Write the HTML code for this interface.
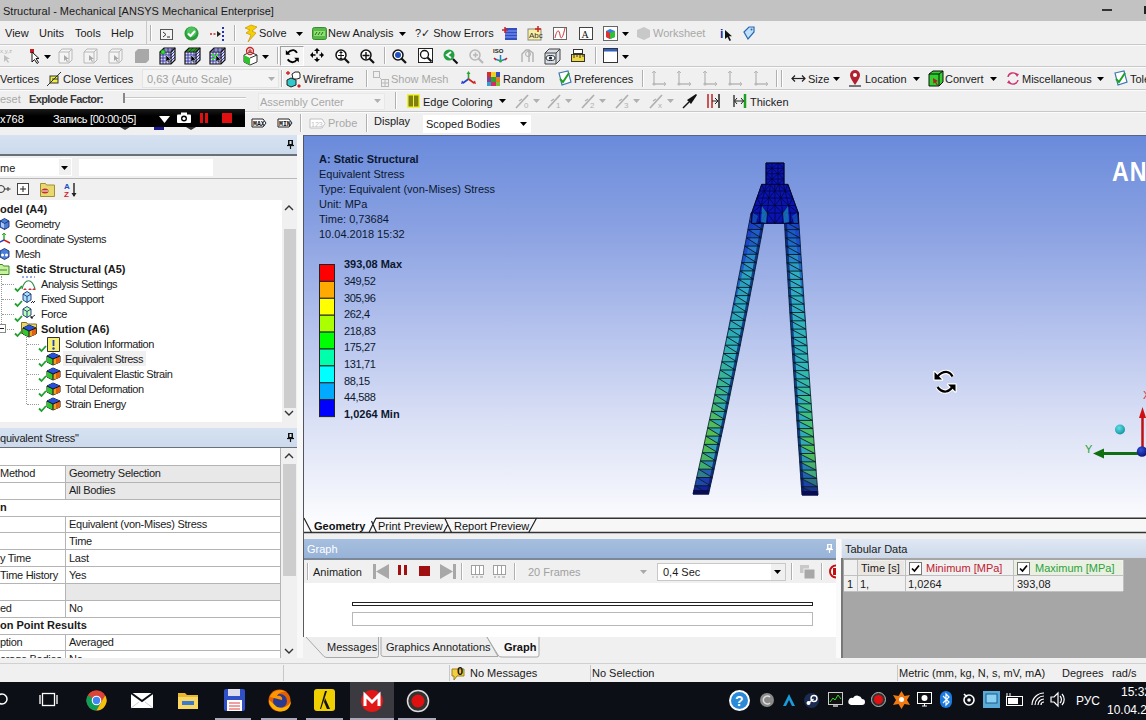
<!DOCTYPE html>
<html><head><meta charset="utf-8">
<style>
*{margin:0;padding:0;box-sizing:border-box}
html,body{width:1146px;height:720px;overflow:hidden;background:#f0f0f0;font-family:"Liberation Sans",sans-serif;font-size:11px;color:#000}
.a{position:absolute}
.t{position:absolute;white-space:nowrap}
svg{overflow:visible}
</style></head><body>
<div class="a" style="left:0px;top:0px;width:1146px;height:21px;background:#c2c2c2"></div>
<div class="t" style="left:3px;top:5.9px;font-size:11px;line-height:11px;color:#1a1a1a;">Structural - Mechanical [ANSYS Mechanical Enterprise]</div>
<div class="a" style="left:1102px;top:9px;width:10px;height:2px;background:#333"></div>
<div class="a" style="left:1144px;top:6px;width:6px;height:8px;border:2px solid #222"></div>
<div class="a" style="left:0px;top:21px;width:1146px;height:114px;background:#f0f0f0"></div>
<div class="a" style="left:0px;top:44px;width:1146px;height:1px;background:#c8c8c8"></div>
<div class="a" style="left:0px;top:45px;width:1146px;height:1px;background:#fbfbfb"></div>
<div class="a" style="left:0px;top:66px;width:1146px;height:1px;background:#c8c8c8"></div>
<div class="a" style="left:0px;top:67px;width:1146px;height:1px;background:#fbfbfb"></div>
<div class="a" style="left:0px;top:89px;width:1146px;height:1px;background:#c8c8c8"></div>
<div class="a" style="left:0px;top:90px;width:1146px;height:1px;background:#fbfbfb"></div>
<div class="a" style="left:0px;top:111px;width:1146px;height:1px;background:#c8c8c8"></div>
<div class="a" style="left:0px;top:112px;width:1146px;height:1px;background:#fbfbfb"></div>
<div class="t" style="left:5px;top:28.4px;font-size:11px;line-height:11px;color:#1a1a1a;">View</div>
<div class="t" style="left:39px;top:28.4px;font-size:11px;line-height:11px;color:#1a1a1a;">Units</div>
<div class="t" style="left:75px;top:28.4px;font-size:11px;line-height:11px;color:#1a1a1a;">Tools</div>
<div class="t" style="left:111px;top:28.4px;font-size:11px;line-height:11px;color:#1a1a1a;">Help</div>
<div class="a" style="left:146px;top:21px;width:1px;height:23px;background:#c8c8c8"></div>
<div class="a" style="left:150px;top:25px;width:1px;height:16px;background:#b0b0b0"></div>
<div class="a" style="left:151px;top:25px;width:1px;height:16px;background:#ffffff"></div>
<svg class="a" style="left:160px;top:29px" width="13" height="11" viewBox="0 0 13 11"><rect x="0.5" y="0.5" width="12" height="10" fill="#f4f4f4" stroke="#555"/><path d="M3 3l3 2.5L3 8M7 8h3" stroke="#333" fill="none"/></svg>
<svg class="a" style="left:184px;top:26px" width="15" height="15" viewBox="0 0 15 15"><circle cx="7.5" cy="7.5" r="7" fill="#2a9d3a"/><circle cx="7.5" cy="6" r="5" fill="#4cc25a"/><path d="M4 7.5l2.5 2.5L11 5" stroke="#fff" stroke-width="2" fill="none"/></svg>
<svg class="a" style="left:210px;top:27px" width="15" height="14" viewBox="0 0 15 14"><path d="M0 7h8" stroke="#d02020" stroke-width="1.6" stroke-dasharray="2 1.5"/><path d="M7 4l4 3-4 3z" fill="#222"/><rect x="12" y="0" width="2" height="2" fill="#2030c0"/><rect x="12" y="4" width="2" height="2" fill="#2030c0"/><rect x="12" y="8" width="2" height="2" fill="#2030c0"/><rect x="12" y="12" width="2" height="2" fill="#2030c0"/></svg>
<div class="a" style="left:234px;top:25px;width:1px;height:16px;background:#b0b0b0"></div>
<div class="a" style="left:235px;top:25px;width:1px;height:16px;background:#ffffff"></div>
<svg class="a" style="left:245px;top:25px" width="13" height="17" viewBox="0 0 13 17"><path d="M6 0L12 2 7 6 11 8 3 17 6 10 1 8 5 5 0 3Z" fill="#f4d000" stroke="#c89000" stroke-width="0.7"/></svg>
<div class="t" style="left:259px;top:28.4px;font-size:11px;line-height:11px;color:#1a1a1a;">Solve</div>
<svg class="a" style="left:296px;top:32px" width="7" height="4" viewBox="0 0 7 4"><path d="M0 0H7L3.5 4Z" fill="#000"/></svg>
<svg class="a" style="left:312px;top:27px" width="15" height="13" viewBox="0 0 15 13"><rect x="0.5" y="0.5" width="14" height="12" rx="2" fill="#58b848" stroke="#3b8a30"/><rect x="2" y="4" width="11" height="5" fill="#8ee070"/><path d="M3 8l2-3M6 8l2-3M9 8l2-3" stroke="#2a6a20"/></svg>
<div class="t" style="left:328px;top:28.4px;font-size:11px;line-height:11px;color:#1a1a1a;">New Analysis</div>
<svg class="a" style="left:399px;top:32px" width="7" height="4" viewBox="0 0 7 4"><path d="M0 0H7L3.5 4Z" fill="#000"/></svg>
<div class="t" style="left:415px;top:28.4px;font-size:11px;line-height:11px;color:#1a1a1a;">?&#10003; Show Errors</div>
<svg class="a" style="left:502px;top:26px" width="16" height="15" viewBox="0 0 16 15"><rect x="3" y="2" width="12" height="12" fill="#3050c0"/><path d="M3 5l12 0M3 8h12M3 11h12" stroke="#8aa0ff"/><path d="M0 4h6M3 1v6" stroke="#d02020" stroke-width="1.5"/></svg>
<svg class="a" style="left:527px;top:26px" width="16" height="15" viewBox="0 0 16 15"><rect x="1" y="3" width="13" height="11" fill="#f8f0a0" stroke="#888"/><text x="2" y="12" font-size="8" font-family="Liberation Sans" fill="#333">Abc</text><path d="M11 0v6M8 3h6" stroke="#d02020" stroke-width="1.5"/></svg>
<svg class="a" style="left:552px;top:26px" width="16" height="15" viewBox="0 0 16 15"><rect x="1.5" y="1.5" width="13" height="12" fill="#fff" stroke="#666"/><path d="M3 12c2-9 4-9 5-3s3 2 5-7" stroke="#d03030" fill="none"/></svg>
<svg class="a" style="left:578px;top:26px" width="16" height="15" viewBox="0 0 16 15"><rect x="1.5" y="1.5" width="13" height="12" fill="#fff" stroke="#444"/><text x="3.5" y="12" font-size="10" font-family="Liberation Serif" fill="#111">A</text></svg>
<svg class="a" style="left:603px;top:26px" width="15" height="15" viewBox="0 0 15 15"><rect x="0.5" y="0.5" width="14" height="14" fill="#fff" stroke="#666"/><path d="M3 5l4-2 5 2v6l-5 2-4-2z" fill="#3080e0"/><path d="M7 7l5-2v6l-5 2z" fill="#30c030"/><path d="M3 5l4 2v6l-4-2z" fill="#e03030"/></svg>
<svg class="a" style="left:622px;top:32px" width="7" height="4" viewBox="0 0 7 4"><path d="M0 0H7L3.5 4Z" fill="#000"/></svg>
<svg class="a" style="left:636px;top:26px" width="15" height="15" viewBox="0 0 15 15"><path d="M1 4l7-3 6 3v7l-6 3-7-3z" fill="#c8c8c8"/></svg>
<div class="t" style="left:653px;top:28.4px;font-size:11px;line-height:11px;color:#a8a8a8;">Worksheet</div>
<div class="t" style="left:720px;top:27.5px;font-size:12px;line-height:12px;font-weight:bold;color:#1030a0;">i</div>
<svg class="a" style="left:725px;top:30px" width="8" height="11" viewBox="0 0 8 11"><path d="M0 0v9l2.5-2 2 4 1.5-.7-2-4H7z" fill="#111"/></svg>
<svg class="a" style="left:743px;top:26px" width="15" height="15" viewBox="0 0 15 15"><path d="M1 6l5-5h5v5l-6 7z" fill="#bfe0f8" stroke="#2a6ab0" stroke-width="1.2" transform="rotate(0)"/><circle cx="8.5" cy="3.5" r="1" fill="#2a6ab0"/></svg>
<svg class="a" style="left:0px;top:48px" width="13" height="15" viewBox="0 0 13 15"><text x="0" y="5" font-size="6" fill="#b0b0b0" font-family="Liberation Sans">x,y,z</text><path d="M4 7v7l2-2 2 3 1-1-2-3h3z" fill="#c0c0c0"/></svg>
<svg class="a" style="left:30px;top:49px" width="12" height="16" viewBox="0 0 12 16"><rect x="0" y="0" width="4" height="4" fill="#c02020"/><path d="M2 3v10l2.5-2.5 2.5 4 1.5-1-2.5-4H9z" fill="#fff" stroke="#111" stroke-width="1"/></svg>
<svg class="a" style="left:44px;top:55px" width="7" height="4" viewBox="0 0 7 4"><path d="M0 0H7L3.5 4Z" fill="#000"/></svg>
<svg class="a" style="left:58px;top:48px" width="17" height="17" viewBox="0 0 17 17"><path d="M1 4l3-3h10v11l-3 3H1z" fill="#f4f4f4" stroke="#b8b8b8"/><path d="M1 4h10v11M11 4l3-3" stroke="#b8b8b8" fill="none"/><path d="M6 7v6l1.5-1.5 1.5 2.5 1-.6-1.5-2.4H11z" fill="#a8a8a8"/></svg>
<svg class="a" style="left:83px;top:48px" width="17" height="17" viewBox="0 0 17 17"><path d="M1 4l3-3h10v11l-3 3H1z" fill="#f4f4f4" stroke="#b8b8b8"/><path d="M1 4h10v11M11 4l3-3" stroke="#b8b8b8" fill="none"/><path d="M6 7v6l1.5-1.5 1.5 2.5 1-.6-1.5-2.4H11z" fill="#a8a8a8"/></svg>
<svg class="a" style="left:108px;top:48px" width="17" height="17" viewBox="0 0 17 17"><path d="M1 4l3-3h10v11l-3 3H1z" fill="#f4f4f4" stroke="#b8b8b8"/><path d="M1 4h10v11M11 4l3-3" stroke="#b8b8b8" fill="none"/><path d="M6 7v6l1.5-1.5 1.5 2.5 1-.6-1.5-2.4H11z" fill="#a8a8a8"/></svg>
<svg class="a" style="left:134px;top:48px" width="16" height="17" viewBox="0 0 16 17"><path d="M1 4l3-3h11v11l-3 3H1z" fill="#a8a8a8"/></svg>
<svg class="a" style="left:159px;top:47px" width="17" height="18" viewBox="0 0 17 18"><path d="M1 5l4-4h11v12l-4 4H1z" fill="#d8d8f8"/><path d="M1 8h11M1 11h11M1 14h11M4 5v12M7 5v12M10 5v12M5 1v4M9 1v4M13 1v4M3 3h11M12 8l4-4M12 11l4-4M12 14l4-4" stroke="#3030a0" stroke-width="0.9"/><path d="M1 5l4-4h11v12l-4 4H1z" fill="none" stroke="#111" stroke-width="1.2"/><path d="M1 5h11v12M12 5l4-4" stroke="#111" stroke-width="1.2" fill="none"/><path d="M7 8v7l1.5-1.5 1.5 2.5 1-.6-1.5-2.4H12z" fill="#000" stroke="#fff" stroke-width="0.4"/><circle cx="4" cy="5" r="2.2" fill="#30e030" stroke="#106010" stroke-width="0.6"/></svg>
<svg class="a" style="left:184px;top:47px" width="17" height="18" viewBox="0 0 17 18"><path d="M1 5l4-4h11v12l-4 4H1z" fill="#d8d8f8"/><path d="M1 8h11M1 11h11M1 14h11M4 5v12M7 5v12M10 5v12M5 1v4M9 1v4M13 1v4M3 3h11M12 8l4-4M12 11l4-4M12 14l4-4" stroke="#3030a0" stroke-width="0.9"/><path d="M1 5l4-4h11l-4 4z" fill="#40c040"/><path d="M5 1l-4 4M9 1L5 5M13 1L9 5M3 3h11" stroke="#106010" stroke-width="0.9"/><path d="M1 5l4-4h11v12l-4 4H1z" fill="none" stroke="#111" stroke-width="1.2"/><path d="M1 5h11v12M12 5l4-4" stroke="#111" stroke-width="1.2" fill="none"/><path d="M7 8v7l1.5-1.5 1.5 2.5 1-.6-1.5-2.4H12z" fill="#000" stroke="#fff" stroke-width="0.4"/></svg>
<svg class="a" style="left:209px;top:47px" width="17" height="18" viewBox="0 0 17 18"><path d="M1 5l4-4h11v12l-4 4H1z" fill="#d8d8f8"/><path d="M1 8h11M1 11h11M1 14h11M4 5v12M7 5v12M10 5v12M5 1v4M9 1v4M13 1v4M3 3h11M12 8l4-4M12 11l4-4M12 14l4-4" stroke="#3030a0" stroke-width="0.9"/><path d="M3 7h2v2H3zM7 7h2v2H7zM3 11h2v2H3zM7 11h2v2H7zM5 9h2v2H5z" fill="#30e030"/><path d="M1 5l4-4h11v12l-4 4H1z" fill="none" stroke="#111" stroke-width="1.2"/><path d="M1 5h11v12M12 5l4-4" stroke="#111" stroke-width="1.2" fill="none"/><path d="M7 8v7l1.5-1.5 1.5 2.5 1-.6-1.5-2.4H12z" fill="#000" stroke="#fff" stroke-width="0.4"/></svg>
<div class="a" style="left:234px;top:47px;width:1px;height:17px;background:#b0b0b0"></div>
<div class="a" style="left:235px;top:47px;width:1px;height:17px;background:#ffffff"></div>
<svg class="a" style="left:242px;top:47px" width="17" height="18" viewBox="0 0 17 18"><path d="M2 8l6-3 7 3v7l-7 3-6-3z" fill="#fff" stroke="#333"/><path d="M2 8l6 3v7l-6-3z" fill="#30c030"/><path d="M8 11l7-3" stroke="#333"/><circle cx="8" cy="4" r="3.5" fill="none" stroke="#d02020" stroke-width="1.3"/><path d="M6 4h4M8 2v4" stroke="#d02020"/></svg>
<svg class="a" style="left:262px;top:55px" width="7" height="4" viewBox="0 0 7 4"><path d="M0 0H7L3.5 4Z" fill="#000"/></svg>
<div class="a" style="left:277px;top:47px;width:1px;height:17px;background:#b0b0b0"></div>
<div class="a" style="left:278px;top:47px;width:1px;height:17px;background:#ffffff"></div>
<div class="a" style="left:280px;top:46px;width:24px;height:20px;border-left:1px solid #a0a0a0;border-top:1px solid #a0a0a0;border-right:1px solid #fff;border-bottom:1px solid #fff;background:#f4f4f4"></div>
<svg class="a" style="left:283px;top:47px" width="20" height="20" viewBox="0 0 20 20"><g transform="scale(0.62)"><path d="M4.5 5L4.5 12.5L12 12.5Z" fill="#000"/><path d="M25.5 17.5L25.5 24.5L18 17.5Z" fill="#000"/><path d="M7.5 9.5Q12 4.5 17 5Q20.5 5.5 22.5 9.5M7.5 20Q11 25 16 24.5Q19.5 24 22 20.5" fill="none" stroke="#000" stroke-width="3"/></g></svg>
<svg class="a" style="left:310px;top:48px" width="15" height="15" viewBox="0 0 15 15"><path d="M7 2.5v3M7 9.5v3M2.5 7h3M9.5 7h3" stroke="#000" stroke-width="1.6"/><path d="M7 0l3 3H4zM7 14l3-3H4zM0 7l3-3v6zM14 7l-3-3v6z" fill="#000"/></svg>
<svg class="a" style="left:335px;top:48px" width="15" height="16" viewBox="0 0 15 16"><circle cx="6" cy="7" r="5" fill="#fff" stroke="#111" stroke-width="1.5"/><path d="M9.5 10.5l4.5 4.5" stroke="#111" stroke-width="2.2"/><path d="M6 4v7M3 7.5h6" stroke="#111"/><path d="M6 3l2 2H4zM6 12l2-2H4z" fill="#111"/></svg>
<svg class="a" style="left:360px;top:48px" width="15" height="16" viewBox="0 0 15 16"><circle cx="6" cy="7" r="5" fill="#fff" stroke="#111" stroke-width="1.5"/><path d="M9.5 10.5l4.5 4.5" stroke="#111" stroke-width="2.2"/><path d="M6 4v7M2.5 7.5h7" stroke="#111" stroke-width="1.4"/></svg>
<div class="a" style="left:384px;top:47px;width:1px;height:17px;background:#b0b0b0"></div>
<div class="a" style="left:385px;top:47px;width:1px;height:17px;background:#ffffff"></div>
<svg class="a" style="left:392px;top:48px" width="15" height="16" viewBox="0 0 15 16"><circle cx="6" cy="7" r="5" fill="#fff" stroke="#111" stroke-width="1.5"/><circle cx="6" cy="7" r="3" fill="#2050c0"/><path d="M9.5 10.5l4.5 4.5" stroke="#111" stroke-width="2.2"/></svg>
<svg class="a" style="left:418px;top:48px" width="15" height="16" viewBox="0 0 15 16"><rect x="0.5" y="0.5" width="14" height="14" fill="#fff" stroke="#222"/><circle cx="6.5" cy="6.5" r="4" fill="#fff" stroke="#111" stroke-width="1.3"/><path d="M9.5 9.5l4 4" stroke="#111" stroke-width="2"/></svg>
<svg class="a" style="left:443px;top:48px" width="15" height="16" viewBox="0 0 15 16"><circle cx="6" cy="7" r="5.5" fill="#20a040"/><path d="M8 4L4 7l4 3" stroke="#fff" stroke-width="2" fill="none"/><path d="M10 11l4.5 4.5" stroke="#111" stroke-width="2.2"/></svg>
<svg class="a" style="left:469px;top:48px" width="15" height="16" viewBox="0 0 15 16"><circle cx="6" cy="7" r="5" fill="#eee" stroke="#b8b8b8" stroke-width="1.5"/><path d="M4 7h5M6.5 4.5v5" stroke="#b8b8b8" stroke-width="1.5"/><path d="M9.5 10.5l4.5 4.5" stroke="#b8b8b8" stroke-width="2.2"/></svg>
<svg class="a" style="left:492px;top:47px" width="17" height="18" viewBox="0 0 17 18"><text x="1" y="6" font-size="6" font-weight="bold" fill="#222" font-family="Liberation Sans">ISO</text><path d="M8.5 8v6M3 12l5.5 2 5.5-2" stroke="#2080d0" stroke-width="1.5" fill="none"/><circle cx="8.5" cy="14" r="1.5" fill="#30b030"/><path d="M2 11l2 2M15 11l-2 2" stroke="#d02020" stroke-width="1.5"/></svg>
<svg class="a" style="left:519px;top:48px" width="16" height="16" viewBox="0 0 16 16"><path d="M3 14V6l4-4h3v12M10 2l4 3v9" stroke="#b0b0b0" stroke-width="1.4" fill="none"/><circle cx="9" cy="6" r="2.5" fill="none" stroke="#b0b0b0"/></svg>
<svg class="a" style="left:544px;top:48px" width="17" height="17" viewBox="0 0 17 17"><path d="M1 5l4-4h11v11l-4 4H1z" fill="#d8dde8" stroke="#444"/><path d="M1 5h11v11M12 5l4-4" stroke="#444" fill="none"/><ellipse cx="6.5" cy="10" rx="4.5" ry="2.5" fill="#fff" stroke="#222"/><circle cx="6.5" cy="10" r="1.6" fill="#123"/></svg>
<svg class="a" style="left:571px;top:49px" width="14" height="14" viewBox="0 0 14 14"><rect x="0.5" y="5.5" width="13" height="7" fill="#f0d840" stroke="#333"/><path d="M3 6v3M6 6v2M9 6v3M12 6v2" stroke="#333"/><rect x="2.5" y="0.5" width="9" height="4" fill="#fff" stroke="#333"/></svg>
<div class="a" style="left:595px;top:47px;width:1px;height:17px;background:#b0b0b0"></div>
<div class="a" style="left:596px;top:47px;width:1px;height:17px;background:#ffffff"></div>
<svg class="a" style="left:603px;top:48px" width="15" height="15" viewBox="0 0 15 15"><rect x="0.5" y="0.5" width="14" height="14" fill="#fff" stroke="#333"/><rect x="1" y="1" width="13" height="2.5" fill="#3060c0"/></svg>
<svg class="a" style="left:622px;top:55px" width="7" height="4" viewBox="0 0 7 4"><path d="M0 0H7L3.5 4Z" fill="#000"/></svg>
<div class="t" style="left:0px;top:73.9px;font-size:11px;line-height:11px;color:#1a1a1a;">Vertices</div>
<svg class="a" style="left:47px;top:72px" width="14" height="15" viewBox="0 0 14 15"><rect x="3" y="4" width="8" height="7" fill="#f0f040" stroke="#333"/><path d="M0 14L14 0" stroke="#333"/><path d="M5 7h6" stroke="#333"/></svg>
<div class="t" style="left:63px;top:73.9px;font-size:11px;line-height:11px;color:#1a1a1a;">Close Vertices</div>
<div class="a" style="left:142px;top:69px;width:137px;height:19px;background:#f4f4f4;border:1px solid #e4e4e4"></div>
<div class="t" style="left:147px;top:73.9px;font-size:11px;line-height:11px;color:#a0a0a0;">0,63 (Auto Scale)</div>
<svg class="a" style="left:268px;top:77px" width="7" height="4" viewBox="0 0 7 4"><path d="M0 0H7L3.5 4Z" fill="#b0b0b0"/></svg>
<div class="a" style="left:281px;top:70px;width:1px;height:17px;background:#b0b0b0"></div>
<div class="a" style="left:282px;top:70px;width:1px;height:17px;background:#ffffff"></div>
<svg class="a" style="left:286px;top:70px" width="15" height="17" viewBox="0 0 15 17"><path d="M6 4l3-2h4l1 2v4l-3 1H7z" fill="#fff" stroke="#222"/><path d="M1 10l4-2 5 2v5l-5 2-4-2z" fill="#30c8c8" stroke="#222"/><path d="M0 3h4M2 1v4" stroke="#d02020" stroke-width="1.3"/><path d="M13 14l-2 2 2 2 2-2z" fill="#d02020"/></svg>
<div class="t" style="left:303px;top:73.9px;font-size:11px;line-height:11px;color:#1a1a1a;">Wireframe</div>
<div class="a" style="left:366px;top:70px;width:1px;height:17px;background:#b0b0b0"></div>
<div class="a" style="left:367px;top:70px;width:1px;height:17px;background:#ffffff"></div>
<svg class="a" style="left:373px;top:71px" width="16" height="16" viewBox="0 0 16 16"><rect x="0.5" y="0.5" width="6" height="6" fill="none" stroke="#b8b8b8"/><path d="M6 6l3 3" stroke="#b8b8b8"/><rect x="8.5" y="8.5" width="7" height="7" fill="none" stroke="#b8b8b8"/><path d="M12 8.5v7M8.5 12h7" stroke="#b8b8b8"/></svg>
<div class="t" style="left:391px;top:73.9px;font-size:11px;line-height:11px;color:#a8a8a8;">Show Mesh</div>
<svg class="a" style="left:461px;top:71px" width="15" height="16" viewBox="0 0 15 16"><path d="M7.5 8V2" stroke="#30a030" stroke-width="1.6"/><path d="M7.5 8L2 12" stroke="#2040d0" stroke-width="1.6"/><path d="M7.5 8L13 12" stroke="#d02020" stroke-width="1.6"/><path d="M7.5 0l2 3h-4z" fill="#30a030"/><path d="M0 13l1-3.5 2.5 2.5z" fill="#2040d0"/><path d="M15 13l-1-3.5-2.5 2.5z" fill="#d02020"/></svg>
<svg class="a" style="left:487px;top:72px" width="13" height="14" viewBox="0 0 13 14"><rect x="0" y="0" width="4" height="5" fill="#d03030"/><rect x="4" y="0" width="5" height="5" fill="#f0d020"/><rect x="9" y="0" width="4" height="5" fill="#3050c0"/><rect x="0" y="5" width="4" height="5" fill="#8040a0"/><rect x="4" y="5" width="5" height="5" fill="#30a030"/><rect x="9" y="5" width="4" height="5" fill="#e08020"/><rect x="0" y="10" width="4" height="4" fill="#30a0d0"/><rect x="4" y="10" width="5" height="4" fill="#d03060"/><rect x="9" y="10" width="4" height="4" fill="#80c030"/></svg>
<div class="t" style="left:503px;top:73.9px;font-size:11px;line-height:11px;color:#1a1a1a;">Random</div>
<svg class="a" style="left:556px;top:71px" width="16" height="16" viewBox="0 0 16 16"><path d="M3 2l9-2 3 11-9 3z" fill="#fff" stroke="#3a7ab0" stroke-width="1.2"/><path d="M4 8l3 3 6-9" stroke="#20a020" stroke-width="2" fill="none"/></svg>
<div class="t" style="left:574px;top:73.9px;font-size:11px;line-height:11px;color:#1a1a1a;">Preferences</div>
<div class="a" style="left:642px;top:70px;width:1px;height:17px;background:#b0b0b0"></div>
<div class="a" style="left:643px;top:70px;width:1px;height:17px;background:#ffffff"></div>
<svg class="a" style="left:651px;top:70px" width="16" height="17" viewBox="0 0 16 17"><path d="M3 1v13h12" stroke="#b8b8b8" stroke-width="1.3" fill="none"/><path d="M1 3l2-2 2 2M13 12l2 2-2 2" stroke="#b8b8b8" fill="none"/><circle cx="3" cy="14" r="1.6" fill="#b8b8b8"/></svg>
<svg class="a" style="left:676px;top:70px" width="16" height="17" viewBox="0 0 16 17"><path d="M3 1v13h12" stroke="#b8b8b8" stroke-width="1.3" fill="none"/><path d="M1 3l2-2 2 2M13 12l2 2-2 2" stroke="#b8b8b8" fill="none"/><circle cx="3" cy="14" r="1.6" fill="#b8b8b8"/></svg>
<svg class="a" style="left:702px;top:70px" width="16" height="17" viewBox="0 0 16 17"><path d="M3 1v13h12" stroke="#b8b8b8" stroke-width="1.3" fill="none"/><path d="M1 3l2-2 2 2M13 12l2 2-2 2" stroke="#b8b8b8" fill="none"/><circle cx="3" cy="14" r="1.6" fill="#b8b8b8"/></svg>
<svg class="a" style="left:727px;top:70px" width="16" height="17" viewBox="0 0 16 17"><path d="M3 1v13h12" stroke="#b8b8b8" stroke-width="1.3" fill="none"/><path d="M1 3l2-2 2 2M13 12l2 2-2 2" stroke="#b8b8b8" fill="none"/><circle cx="3" cy="14" r="1.6" fill="#b8b8b8"/></svg>
<svg class="a" style="left:753px;top:70px" width="16" height="17" viewBox="0 0 16 17"><path d="M3 1v13h12" stroke="#b8b8b8" stroke-width="1.3" fill="none"/><path d="M1 3l2-2 2 2M13 12l2 2-2 2" stroke="#b8b8b8" fill="none"/><circle cx="3" cy="14" r="1.6" fill="#b8b8b8"/></svg>
<div class="a" style="left:776px;top:70px;width:1px;height:17px;background:#b0b0b0"></div>
<div class="a" style="left:777px;top:70px;width:1px;height:17px;background:#ffffff"></div>
<div class="a" style="left:781px;top:70px;width:1px;height:17px;background:#b0b0b0"></div>
<div class="a" style="left:782px;top:70px;width:1px;height:17px;background:#ffffff"></div>
<svg class="a" style="left:791px;top:74px" width="15" height="9" viewBox="0 0 15 9"><path d="M1 4.5h13" stroke="#222" stroke-width="1.2"/><path d="M4 1.5L1 4.5 4 7.5M11 1.5l3 3-3 3" stroke="#222" stroke-width="1.2" fill="none"/></svg>
<div class="t" style="left:808px;top:73.9px;font-size:11px;line-height:11px;color:#1a1a1a;">Size</div>
<svg class="a" style="left:833px;top:77px" width="7" height="4" viewBox="0 0 7 4"><path d="M0 0H7L3.5 4Z" fill="#000"/></svg>
<svg class="a" style="left:848px;top:70px" width="14" height="17" viewBox="0 0 14 17"><path d="M7 15C3 9 2 7 2 5a5 5 0 0 1 10 0c0 2-1 4-5 10z" fill="#b02030"/><circle cx="7" cy="5" r="2" fill="#fff"/><path d="M1 16h12" stroke="#333" stroke-width="1.3"/></svg>
<div class="t" style="left:865px;top:73.9px;font-size:11px;line-height:11px;color:#1a1a1a;">Location</div>
<svg class="a" style="left:913px;top:77px" width="7" height="4" viewBox="0 0 7 4"><path d="M0 0H7L3.5 4Z" fill="#000"/></svg>
<svg class="a" style="left:928px;top:70px" width="16" height="17" viewBox="0 0 16 17"><path d="M1 4l4-3h10v11l-4 4H1z" fill="#30d030" stroke="#111"/><path d="M1 4h10v12M11 4l4-3" stroke="#111" fill="none"/><path d="M5 8l5 3-2 1 2 3-1 .6-2-3-1.6 1.2z" fill="#b02020"/></svg>
<div class="t" style="left:945px;top:73.9px;font-size:11px;line-height:11px;color:#1a1a1a;">Convert</div>
<svg class="a" style="left:990px;top:77px" width="7" height="4" viewBox="0 0 7 4"><path d="M0 0H7L3.5 4Z" fill="#000"/></svg>
<svg class="a" style="left:1006px;top:71px" width="14" height="15" viewBox="0 0 14 15"><path d="M11 4A5 5 0 0 0 2 6" stroke="#d03070" stroke-width="1.4" fill="none"/><path d="M3 11a5 5 0 0 0 9-2" stroke="#d03070" stroke-width="1.4" fill="none"/><path d="M9 2l4 1-2 3z" fill="#d03070"/><path d="M5 13l-4-1 2-3z" fill="#d03070"/></svg>
<div class="t" style="left:1022px;top:73.9px;font-size:11px;line-height:11px;color:#1a1a1a;">Miscellaneous</div>
<svg class="a" style="left:1097px;top:77px" width="7" height="4" viewBox="0 0 7 4"><path d="M0 0H7L3.5 4Z" fill="#000"/></svg>
<svg class="a" style="left:1112px;top:71px" width="16" height="16" viewBox="0 0 16 16"><path d="M3 2l9-2 3 11-9 3z" fill="#fff" stroke="#3a7ab0" stroke-width="1.2"/><path d="M4 8l3 3 6-9" stroke="#20a020" stroke-width="2" fill="none"/></svg>
<div class="t" style="left:1130px;top:73.9px;font-size:11px;line-height:11px;color:#1a1a1a;">Tolerance</div>
<div class="t" style="left:0px;top:94.4px;font-size:11px;line-height:11px;color:#a8a8a8;">eset</div>
<div class="t" style="left:29px;top:94.4px;font-size:11px;line-height:11px;font-weight:bold;color:#383838;letter-spacing:-0.6px;">Explode Factor:</div>
<div class="a" style="left:123px;top:97px;width:123px;height:2px;background:#c8c8c8;border-bottom:1px solid #fff"></div>
<div class="a" style="left:123px;top:93px;width:2px;height:10px;background:#888"></div>
<div class="a" style="left:258px;top:93px;width:127px;height:17px;background:#f4f4f4;border:1px solid #e8e8e8"></div>
<div class="t" style="left:260px;top:96.9px;font-size:11px;line-height:11px;color:#a8a8a8;">Assembly Center</div>
<svg class="a" style="left:374px;top:99px" width="7" height="4" viewBox="0 0 7 4"><path d="M0 0H7L3.5 4Z" fill="#b0b0b0"/></svg>
<div class="a" style="left:395px;top:92px;width:1px;height:17px;background:#b0b0b0"></div>
<div class="a" style="left:396px;top:92px;width:1px;height:17px;background:#ffffff"></div>
<svg class="a" style="left:407px;top:94px" width="13" height="14" viewBox="0 0 13 14"><rect x="0" y="0" width="13" height="14" fill="#f0f040"/><rect x="1.5" y="1.5" width="4.5" height="11" fill="#808010"/><rect x="7" y="1.5" width="4.5" height="11" fill="#808010"/></svg>
<div class="t" style="left:423px;top:96.9px;font-size:11px;line-height:11px;color:#1a1a1a;">Edge Coloring</div>
<svg class="a" style="left:499px;top:99px" width="7" height="4" viewBox="0 0 7 4"><path d="M0 0H7L3.5 4Z" fill="#000"/></svg>
<svg class="a" style="left:515px;top:93px" width="17" height="16" viewBox="0 0 17 16"><path d="M1 15L13 2" stroke="#b0b0b0" stroke-width="1.8"/><path d="M4 8l3-2" stroke="#b0b0b0" stroke-width="1.2"/><text x="9" y="15" font-size="8" fill="#b0b0b0" font-family="Liberation Sans">0</text></svg>
<svg class="a" style="left:533px;top:99px" width="7" height="4" viewBox="0 0 7 4"><path d="M0 0H7L3.5 4Z" fill="#b0b0b0"/></svg>
<svg class="a" style="left:547px;top:93px" width="17" height="16" viewBox="0 0 17 16"><path d="M1 15L13 2" stroke="#b0b0b0" stroke-width="1.8"/><path d="M4 8l3-2" stroke="#b0b0b0" stroke-width="1.2"/><text x="9" y="15" font-size="8" fill="#b0b0b0" font-family="Liberation Sans">1</text></svg>
<svg class="a" style="left:565px;top:99px" width="7" height="4" viewBox="0 0 7 4"><path d="M0 0H7L3.5 4Z" fill="#b0b0b0"/></svg>
<svg class="a" style="left:581px;top:93px" width="17" height="16" viewBox="0 0 17 16"><path d="M1 15L13 2" stroke="#b0b0b0" stroke-width="1.8"/><path d="M4 8l3-2" stroke="#b0b0b0" stroke-width="1.2"/><text x="9" y="15" font-size="8" fill="#b0b0b0" font-family="Liberation Sans">2</text></svg>
<svg class="a" style="left:599px;top:99px" width="7" height="4" viewBox="0 0 7 4"><path d="M0 0H7L3.5 4Z" fill="#b0b0b0"/></svg>
<svg class="a" style="left:615px;top:93px" width="17" height="16" viewBox="0 0 17 16"><path d="M1 15L13 2" stroke="#b0b0b0" stroke-width="1.8"/><path d="M4 8l3-2" stroke="#b0b0b0" stroke-width="1.2"/><text x="9" y="15" font-size="8" fill="#b0b0b0" font-family="Liberation Sans">3</text></svg>
<svg class="a" style="left:633px;top:99px" width="7" height="4" viewBox="0 0 7 4"><path d="M0 0H7L3.5 4Z" fill="#b0b0b0"/></svg>
<svg class="a" style="left:649px;top:93px" width="17" height="16" viewBox="0 0 17 16"><path d="M1 15L13 2" stroke="#b0b0b0" stroke-width="1.8"/><path d="M4 8l3-2" stroke="#b0b0b0" stroke-width="1.2"/><text x="9" y="15" font-size="8" fill="#b0b0b0" font-family="Liberation Sans">x</text></svg>
<svg class="a" style="left:667px;top:99px" width="7" height="4" viewBox="0 0 7 4"><path d="M0 0H7L3.5 4Z" fill="#b0b0b0"/></svg>
<svg class="a" style="left:682px;top:93px" width="16" height="16" viewBox="0 0 16 16"><path d="M1 15l6-6" stroke="#111" stroke-width="1.5"/><path d="M5 7l4 4 6-9-1-1z" fill="#111"/></svg>
<svg class="a" style="left:707px;top:93px" width="15" height="16" viewBox="0 0 15 16"><path d="M1 1v14M5 1v14" stroke="#c02020" stroke-width="1.5"/><path d="M12 1v14" stroke="#222" stroke-width="1.5"/><path d="M5 8h6M8 5l3 3-3 3" stroke="#222" fill="none"/></svg>
<svg class="a" style="left:733px;top:93px" width="16" height="16" viewBox="0 0 16 16"><path d="M1 2v12" stroke="#222" stroke-width="1.3"/><path d="M12 1v14" stroke="#20a020" stroke-width="2.5"/><path d="M2 8h9M4 5L1.5 8 4 11M8 5l2.5 3L8 11" stroke="#222" fill="none"/></svg>
<div class="t" style="left:750px;top:96.9px;font-size:11px;line-height:11px;color:#1a1a1a;">Thicken</div>
<div class="a" style="left:0px;top:109px;width:245px;height:18px;background:linear-gradient(#1a1a1a,#000 40%)"></div>
<div class="t" style="left:0px;top:113.9px;font-size:11px;line-height:11px;color:#fff;">x768</div>
<div class="t" style="left:53px;top:113.9px;font-size:11px;line-height:11px;color:#fff;letter-spacing:-0.3px;">Запись [00:00:05]</div>
<div class="a" style="left:154px;top:127px;width:10px;height:3px;background:#1a1a90"></div>
<svg class="a" style="left:120px;top:127px" width="10" height="3" viewBox="0 0 10 3"><path d="M0 0h10L5 3z" fill="#333"/></svg>
<svg class="a" style="left:186px;top:127px" width="10" height="3" viewBox="0 0 10 3"><path d="M0 0h10L5 3z" fill="#333"/></svg>
<svg class="a" style="left:159px;top:116px" width="11" height="7" viewBox="0 0 11 7"><path d="M0 0h11L5.5 7z" fill="#fff"/></svg>
<svg class="a" style="left:177px;top:112px" width="14" height="11" viewBox="0 0 14 11"><rect x="0" y="2.5" width="14" height="8.5" rx="1" fill="#fff"/><rect x="4" y="0.5" width="6" height="3" fill="#fff"/><circle cx="7" cy="6.5" r="3" fill="#000"/><circle cx="7" cy="6.5" r="1.6" fill="#fff"/></svg>
<div class="a" style="left:200px;top:113px;width:3px;height:10px;background:#e01010"></div>
<div class="a" style="left:205px;top:113px;width:3px;height:10px;background:#e01010"></div>
<div class="a" style="left:222px;top:113px;width:10px;height:10px;background:#e01010"></div>
<svg class="a" style="left:251px;top:118px" width="16" height="10" viewBox="0 0 16 10"><path d="M1 1h11l3 4-3 4H1z" fill="#fff" stroke="#222"/><text x="2" y="8" font-size="6.5" font-weight="bold" fill="#111" font-family="Liberation Mono">MAX</text></svg>
<svg class="a" style="left:277px;top:118px" width="16" height="10" viewBox="0 0 16 10"><path d="M1 1h11l3 4-3 4H1z" fill="#fff" stroke="#222"/><text x="2" y="8" font-size="6.5" font-weight="bold" fill="#111" font-family="Liberation Mono">MIN</text></svg>
<div class="a" style="left:300px;top:114px;width:1px;height:18px;background:#b0b0b0"></div>
<div class="a" style="left:301px;top:114px;width:1px;height:18px;background:#ffffff"></div>
<svg class="a" style="left:309px;top:118px" width="17" height="11" viewBox="0 0 17 11"><path d="M1 1h12l3 4.5-3 4.5H1z" fill="#fff" stroke="#c0c0c0"/><text x="2" y="8.5" font-size="7" fill="#c0c0c0" font-family="Liberation Sans">123</text></svg>
<div class="t" style="left:328px;top:117.9px;font-size:11px;line-height:11px;color:#a8a8a8;">Probe</div>
<div class="a" style="left:366px;top:114px;width:1px;height:18px;background:#b0b0b0"></div>
<div class="a" style="left:367px;top:114px;width:1px;height:18px;background:#ffffff"></div>
<div class="t" style="left:374px;top:116.4px;font-size:11px;line-height:11px;color:#1a1a1a;">Display</div>
<div class="a" style="left:423px;top:115px;width:108px;height:18px;background:#fff"></div>
<div class="t" style="left:426px;top:118.9px;font-size:11px;line-height:11px;color:#1a1a1a;">Scoped Bodies</div>
<svg class="a" style="left:520px;top:122px" width="7" height="4" viewBox="0 0 7 4"><path d="M0 0H7L3.5 4Z" fill="#000"/></svg>
<div class="a" style="left:0px;top:135px;width:298px;height:527px;background:#f0f0f0"></div>
<div class="a" style="left:0px;top:135px;width:297px;height:19px;background:linear-gradient(#d6e2f1,#ccdaec)"></div>
<div class="a" style="left:0px;top:154px;width:297px;height:2px;background:#6a7078"></div>
<svg class="a" style="left:287px;top:140px" width="7" height="9" viewBox="0 0 7 9"><path d="M1 0h5v5H1z" fill="#111"/><path d="M2.5 1h2v3h-2z" fill="#d8e4f2"/><path d="M0 5.5h7" stroke="#111" stroke-width="1.2"/><path d="M3.5 6v3" stroke="#111" stroke-width="1.2"/></svg>
<div class="a" style="left:0px;top:158px;width:72px;height:18px;background:#fff"></div>
<div class="t" style="left:0px;top:162.9px;font-size:11px;line-height:11px;color:#1a1a1a;">me</div>
<div class="a" style="left:59px;top:159px;width:12px;height:16px;background:#f0f0f0"></div>
<svg class="a" style="left:61px;top:166px" width="7" height="4" viewBox="0 0 7 4"><path d="M0 0H7L3.5 4Z" fill="#000"/></svg>
<div class="a" style="left:79px;top:159px;width:134px;height:17px;background:#fff"></div>
<div class="a" style="left:0px;top:178px;width:297px;height:1px;background:#b8b8b8"></div>
<svg class="a" style="left:-4px;top:183px" width="16" height="12" viewBox="0 0 16 12"><circle cx="5" cy="6" r="3.5" fill="none" stroke="#333"/><path d="M8.5 6h6M12 4v4" stroke="#333"/></svg>
<svg class="a" style="left:17px;top:183px" width="13" height="13" viewBox="0 0 13 13"><rect x="0.5" y="0.5" width="11" height="11" fill="#fff" stroke="#444"/><path d="M3 6h6M6 3v6" stroke="#222"/></svg>
<svg class="a" style="left:40px;top:181px" width="15" height="16" viewBox="0 0 15 16"><path d="M0.5 2.5h5l1 1.5h8v11.5H0.5z" fill="#e8d870" stroke="#a09030"/><ellipse cx="5" cy="10" rx="3.5" ry="2.5" fill="#c03030"/><path d="M2 10h6" stroke="#fff"/></svg>
<svg class="a" style="left:64px;top:182px" width="14" height="16" viewBox="0 0 14 16"><text x="0" y="7" font-size="8" font-weight="bold" fill="#2050c0" font-family="Liberation Sans">A</text><text x="0" y="15" font-size="8" font-weight="bold" fill="#d02030" font-family="Liberation Sans">Z</text><path d="M10 1v13" stroke="#222" stroke-width="1.4"/><path d="M7.5 11l2.5 4 2.5-4z" fill="#222"/></svg>
<div class="a" style="left:0px;top:200px;width:282px;height:222px;background:#fff"></div>
<div class="a" style="left:282px;top:200px;width:15px;height:222px;background:#f0f0f0"></div>
<svg class="a" style="left:284px;top:204px" width="10" height="7" viewBox="0 0 10 7"><path d="M1 6l4-4 4 4" stroke="#333" stroke-width="1.4" fill="none"/></svg>
<div class="a" style="left:284px;top:229px;width:12px;height:179px;background:#cdcdcd"></div>
<svg class="a" style="left:284px;top:410px" width="10" height="7" viewBox="0 0 10 7"><path d="M1 1l4 4 4-4" stroke="#333" stroke-width="1.4" fill="none"/></svg>
<div class="t" style="left:0px;top:203.7px;font-size:11px;line-height:11px;font-weight:bold;color:#1a1a1a;">odel (A4)</div>
<svg class="a" style="left:-1px;top:218px" width="11" height="12" viewBox="0 0 11 12"><path d="M1 3l4.5-2.5L10 3v6l-4.5 2.5L1 9z" fill="#4a7fd8" stroke="#1a3070" stroke-width="0.9"/><path d="M1 3l4.5 2.5L10 3M5.5 5.5v6" stroke="#1a3070" stroke-width="0.9" fill="none"/><path d="M2 4l3.5 2v4.5L2 8.5z" fill="#a8c8ff"/></svg>
<div class="t" style="left:15px;top:218.7px;font-size:11px;line-height:11px;color:#1a1a1a;letter-spacing:-0.45px;">Geometry</div>
<svg class="a" style="left:-2px;top:232px" width="14" height="14" viewBox="0 0 14 14"><path d="M6 8V1" stroke="#30b030" stroke-width="1.5"/><path d="M6 8L0 11" stroke="#2040d0" stroke-width="1.5"/><path d="M6 8l6 3" stroke="#d02020" stroke-width="1.5"/><path d="M4 3l2-2 2 2" stroke="#30b030" fill="none"/></svg>
<div class="t" style="left:15px;top:233.7px;font-size:11px;line-height:11px;color:#1a1a1a;letter-spacing:-0.45px;">Coordinate Systems</div>
<svg class="a" style="left:-1px;top:248px" width="11" height="12" viewBox="0 0 11 12"><path d="M1 3l4.5-2.5L10 3v6l-4.5 2.5L1 9z" fill="#4a7fd8" stroke="#1a3070" stroke-width="0.9"/><circle cx="3.5" cy="7" r="1.5" fill="#fff"/><circle cx="7.5" cy="7" r="1.5" fill="#fff"/></svg>
<div class="t" style="left:15px;top:248.7px;font-size:11px;line-height:11px;color:#1a1a1a;letter-spacing:-0.45px;">Mesh</div>
<svg class="a" style="left:-2px;top:262px" width="12" height="13" viewBox="0 0 12 13"><path d="M0.5 2.5h4l1 1.5h5.5v8.5H0.5z" fill="#c8f0a0" stroke="#3a8a20"/><path d="M1 8h8" stroke="#3a8a20"/></svg>
<div class="t" style="left:16px;top:263.7px;font-size:11px;line-height:11px;font-weight:bold;color:#1a1a1a;">Static Structural (A5)</div>
<div class="a" style="left:1px;top:276px;width:1px;height:52px;border-left:1px dotted #999"></div>
<div class="a" style="left:2px;top:284px;width:12px;height:1px;border-top:1px dotted #999"></div>
<div class="a" style="left:2px;top:299px;width:12px;height:1px;border-top:1px dotted #999"></div>
<div class="a" style="left:2px;top:314px;width:12px;height:1px;border-top:1px dotted #999"></div>
<div class="a" style="left:2px;top:329px;width:12px;height:1px;border-top:1px dotted #999"></div>
<svg class="a" style="left:-3px;top:324px" width="9" height="9" viewBox="0 0 9 9"><rect x="0.5" y="0.5" width="8" height="8" fill="#fff" stroke="#888"/><path d="M2 4.5h5" stroke="#222"/></svg>
<svg class="a" style="left:21px;top:276px" width="15" height="15" viewBox="0 0 15 15"><path d="M1 13c3-11 10-11 13 0" stroke="#2a8a4a" stroke-width="1.2" fill="none"/><path d="M1 1h13" stroke="#3050d0" stroke-dasharray="2 2"/><path d="M2 14l2-2 2 2M7 14l2-2 2 2M11 14l2-2 2 2" fill="#d03030"/></svg>
<svg class="a" style="left:14px;top:285px" width="9" height="7" viewBox="0 0 9 7"><path d="M1 3.5l2.5 2.5L8 1" stroke="#20a030" stroke-width="1.8" fill="none"/></svg>
<div class="t" style="left:41px;top:278.7px;font-size:11px;line-height:11px;color:#1a1a1a;letter-spacing:-0.45px;">Analysis Settings</div>
<svg class="a" style="left:22px;top:291px" width="14" height="13" viewBox="0 0 14 13"><path d="M1 3l4-2.5L9 3v6l-4 2.5L1 9z" fill="#a8e0ff" stroke="#1a3070" stroke-width="0.9"/><path d="M1 3l4 2.5L9 3M5 5.5v6" stroke="#1a3070" stroke-width="0.9" fill="none"/><path d="M9 12l2-2M11 12l2-2" stroke="#222"/></svg>
<svg class="a" style="left:14px;top:300px" width="9" height="7" viewBox="0 0 9 7"><path d="M1 3.5l2.5 2.5L8 1" stroke="#20a030" stroke-width="1.8" fill="none"/></svg>
<div class="t" style="left:41px;top:293.7px;font-size:11px;line-height:11px;color:#1a1a1a;letter-spacing:-0.45px;">Fixed Support</div>
<svg class="a" style="left:22px;top:306px" width="14" height="13" viewBox="0 0 14 13"><path d="M1 3l4-2.5L9 3v6l-4 2.5L1 9z" fill="#b8ffb8" stroke="#1a3070" stroke-width="0.9"/><path d="M1 3l4 2.5L9 3M5 5.5v6" stroke="#1a3070" stroke-width="0.9" fill="none"/><path d="M13 9l-4 3M9 10v2h2" stroke="#222"/></svg>
<svg class="a" style="left:14px;top:315px" width="9" height="7" viewBox="0 0 9 7"><path d="M1 3.5l2.5 2.5L8 1" stroke="#20a030" stroke-width="1.8" fill="none"/></svg>
<div class="t" style="left:41px;top:308.7px;font-size:11px;line-height:11px;color:#1a1a1a;letter-spacing:-0.45px;">Force</div>
<svg class="a" style="left:21px;top:320px" width="17" height="14" viewBox="0 0 17 14"><path d="M0.5 2.5h5l1 1.5h9v9.5H0.5z" fill="#e8d870" stroke="#807020"/></svg>
<svg class="a" style="left:22px;top:324px" width="15" height="13" viewBox="0 0 15 13"><path d="M1 4l6-3 7 3v6l-7 3-6-3z" fill="#30c0c0" stroke="#111" stroke-width="1"/><path d="M1 4l6 3v6l-6-3z" fill="#30c830"/><path d="M7 7l7-3v6l-7 3z" fill="#f0a020"/><path d="M7 1l7 3-7 3-6-3z" fill="#2850e0"/><path d="M10 5.5l4-1.5v6l-4 1.7z" fill="#e06010"/><path d="M1 4l6 3 7-3M7 7v6" stroke="#111" stroke-width="1" fill="none"/></svg>
<svg class="a" style="left:14px;top:330px" width="9" height="7" viewBox="0 0 9 7"><path d="M1 3.5l2.5 2.5L8 1" stroke="#20a030" stroke-width="1.8" fill="none"/></svg>
<div class="t" style="left:41px;top:323.7px;font-size:11px;line-height:11px;font-weight:bold;color:#1a1a1a;">Solution (A6)</div>
<div class="a" style="left:26px;top:337px;width:1px;height:67px;border-left:1px dotted #999"></div>
<div class="a" style="left:27px;top:344px;width:12px;height:1px;border-top:1px dotted #999"></div>
<div class="a" style="left:27px;top:359px;width:12px;height:1px;border-top:1px dotted #999"></div>
<div class="a" style="left:27px;top:374px;width:12px;height:1px;border-top:1px dotted #999"></div>
<div class="a" style="left:27px;top:389px;width:12px;height:1px;border-top:1px dotted #999"></div>
<div class="a" style="left:27px;top:404px;width:12px;height:1px;border-top:1px dotted #999"></div>
<svg class="a" style="left:47px;top:337px" width="13" height="15" viewBox="0 0 13 15"><path d="M0.5 0.5h12v14H0.5z" fill="#f8f070" stroke="#333"/><path d="M6.5 3v6" stroke="#2040c0" stroke-width="1.8"/><circle cx="6.5" cy="11.5" r="1.2" fill="#2040c0"/></svg>
<svg class="a" style="left:38px;top:345px" width="9" height="7" viewBox="0 0 9 7"><path d="M1 3.5l2.5 2.5L8 1" stroke="#20a030" stroke-width="1.8" fill="none"/></svg>
<div class="t" style="left:65px;top:338.7px;font-size:11px;line-height:11px;color:#1a1a1a;letter-spacing:-0.45px;">Solution Information</div>
<div class="a" style="left:63px;top:351px;width:83px;height:15px;background:#f0f0f0"></div>
<svg class="a" style="left:46px;top:351.8px" width="15" height="13" viewBox="0 0 15 13"><path d="M1 4l6-3 7 3v6l-7 3-6-3z" fill="#30c0c0" stroke="#111" stroke-width="1"/><path d="M1 4l6 3v6l-6-3z" fill="#30c830"/><path d="M7 7l7-3v6l-7 3z" fill="#f0a020"/><path d="M7 1l7 3-7 3-6-3z" fill="#2850e0"/><path d="M10 5.5l4-1.5v6l-4 1.7z" fill="#e06010"/><path d="M1 4l6 3 7-3M7 7v6" stroke="#111" stroke-width="1" fill="none"/></svg>
<svg class="a" style="left:38px;top:359.8px" width="9" height="7" viewBox="0 0 9 7"><path d="M1 3.5l2.5 2.5L8 1" stroke="#20a030" stroke-width="1.8" fill="none"/></svg>
<div class="t" style="left:65px;top:353.7px;font-size:11px;line-height:11px;color:#1a1a1a;letter-spacing:-0.45px;">Equivalent Stress</div>
<svg class="a" style="left:46px;top:366.8px" width="15" height="13" viewBox="0 0 15 13"><path d="M1 4l6-3 7 3v6l-7 3-6-3z" fill="#30c0c0" stroke="#111" stroke-width="1"/><path d="M1 4l6 3v6l-6-3z" fill="#30c830"/><path d="M7 7l7-3v6l-7 3z" fill="#f0a020"/><path d="M7 1l7 3-7 3-6-3z" fill="#2850e0"/><path d="M10 5.5l4-1.5v6l-4 1.7z" fill="#e06010"/><path d="M1 4l6 3 7-3M7 7v6" stroke="#111" stroke-width="1" fill="none"/></svg>
<svg class="a" style="left:38px;top:374.8px" width="9" height="7" viewBox="0 0 9 7"><path d="M1 3.5l2.5 2.5L8 1" stroke="#20a030" stroke-width="1.8" fill="none"/></svg>
<div class="t" style="left:65px;top:368.7px;font-size:11px;line-height:11px;color:#1a1a1a;letter-spacing:-0.45px;">Equivalent Elastic Strain</div>
<svg class="a" style="left:46px;top:381.8px" width="15" height="13" viewBox="0 0 15 13"><path d="M1 4l6-3 7 3v6l-7 3-6-3z" fill="#30c0c0" stroke="#111" stroke-width="1"/><path d="M1 4l6 3v6l-6-3z" fill="#30c830"/><path d="M7 7l7-3v6l-7 3z" fill="#f0a020"/><path d="M7 1l7 3-7 3-6-3z" fill="#2850e0"/><path d="M10 5.5l4-1.5v6l-4 1.7z" fill="#e06010"/><path d="M1 4l6 3 7-3M7 7v6" stroke="#111" stroke-width="1" fill="none"/></svg>
<svg class="a" style="left:38px;top:389.8px" width="9" height="7" viewBox="0 0 9 7"><path d="M1 3.5l2.5 2.5L8 1" stroke="#20a030" stroke-width="1.8" fill="none"/></svg>
<div class="t" style="left:65px;top:383.7px;font-size:11px;line-height:11px;color:#1a1a1a;letter-spacing:-0.45px;">Total Deformation</div>
<svg class="a" style="left:46px;top:396.8px" width="15" height="13" viewBox="0 0 15 13"><path d="M1 4l6-3 7 3v6l-7 3-6-3z" fill="#30c0c0" stroke="#111" stroke-width="1"/><path d="M1 4l6 3v6l-6-3z" fill="#30c830"/><path d="M7 7l7-3v6l-7 3z" fill="#f0a020"/><path d="M7 1l7 3-7 3-6-3z" fill="#2850e0"/><path d="M10 5.5l4-1.5v6l-4 1.7z" fill="#e06010"/><path d="M1 4l6 3 7-3M7 7v6" stroke="#111" stroke-width="1" fill="none"/></svg>
<svg class="a" style="left:38px;top:404.8px" width="9" height="7" viewBox="0 0 9 7"><path d="M1 3.5l2.5 2.5L8 1" stroke="#20a030" stroke-width="1.8" fill="none"/></svg>
<div class="t" style="left:65px;top:398.7px;font-size:11px;line-height:11px;color:#1a1a1a;letter-spacing:-0.45px;">Strain Energy</div>
<div class="a" style="left:0px;top:422px;width:298px;height:6px;background:#f0f0f0"></div>
<div class="a" style="left:0px;top:428px;width:297px;height:19px;background:linear-gradient(#d6e2f1,#ccdaec)"></div>
<div class="a" style="left:0px;top:447px;width:297px;height:1px;background:#6a7078"></div>
<div class="t" style="left:0px;top:432.9px;font-size:11px;line-height:11px;color:#1a1a1a;letter-spacing:-0.2px;">quivalent Stress"</div>
<svg class="a" style="left:287px;top:433px" width="7" height="9" viewBox="0 0 7 9"><path d="M1 0h5v5H1z" fill="#111"/><path d="M2.5 1h2v3h-2z" fill="#d8e4f2"/><path d="M0 5.5h7" stroke="#111" stroke-width="1.2"/><path d="M3.5 6v3" stroke="#111" stroke-width="1.2"/></svg>
<div class="a" style="left:0px;top:448px;width:281px;height:210px;background:#fff"></div>
<div class="a" style="left:281px;top:448px;width:16px;height:210px;background:#f0f0f0"></div>
<svg class="a" style="left:284px;top:452px" width="10" height="7" viewBox="0 0 10 7"><path d="M1 6l4-4 4 4" stroke="#333" stroke-width="1.4" fill="none"/></svg>
<div class="a" style="left:283px;top:464px;width:13px;height:112px;background:#cdcdcd"></div>
<svg class="a" style="left:284px;top:648px" width="10" height="7" viewBox="0 0 10 7"><path d="M1 1l4 4 4-4" stroke="#333" stroke-width="1.4" fill="none"/></svg>
<div class="a" style="left:66px;top:466px;width:214px;height:16px;background:#e8e8e8"></div>
<div class="a" style="left:0px;top:465px;width:280px;height:1px;background:#b4b4b4"></div>
<div class="a" style="left:65px;top:465px;width:1px;height:17px;background:#b4b4b4"></div>
<div class="t" style="left:0px;top:468.4px;font-size:11px;line-height:11px;color:#1a1a1a;letter-spacing:-0.28px;">Method</div>
<div class="t" style="left:69px;top:468.4px;font-size:11px;line-height:11px;color:#1a1a1a;letter-spacing:-0.28px;">Geometry Selection</div>
<div class="a" style="left:66px;top:483px;width:214px;height:16px;background:#e8e8e8"></div>
<div class="a" style="left:0px;top:482px;width:280px;height:1px;background:#b4b4b4"></div>
<div class="a" style="left:65px;top:482px;width:1px;height:17px;background:#b4b4b4"></div>
<div class="t" style="left:0px;top:485.2px;font-size:11px;line-height:11px;color:#1a1a1a;letter-spacing:-0.28px;"></div>
<div class="t" style="left:69px;top:485.2px;font-size:11px;line-height:11px;color:#1a1a1a;letter-spacing:-0.28px;">All Bodies</div>
<div class="a" style="left:0px;top:499px;width:280px;height:1px;background:#b4b4b4"></div>
<div class="t" style="left:0px;top:502.1px;font-size:11px;line-height:11px;font-weight:bold;color:#1a1a1a;">n</div>
<div class="a" style="left:0px;top:516px;width:280px;height:1px;background:#b4b4b4"></div>
<div class="a" style="left:65px;top:516px;width:1px;height:17px;background:#b4b4b4"></div>
<div class="t" style="left:0px;top:518.9px;font-size:11px;line-height:11px;color:#1a1a1a;letter-spacing:-0.28px;"></div>
<div class="t" style="left:69px;top:518.9px;font-size:11px;line-height:11px;color:#1a1a1a;letter-spacing:-0.28px;">Equivalent (von-Mises) Stress</div>
<div class="a" style="left:0px;top:532px;width:280px;height:1px;background:#b4b4b4"></div>
<div class="a" style="left:65px;top:532px;width:1px;height:17px;background:#b4b4b4"></div>
<div class="t" style="left:0px;top:535.8px;font-size:11px;line-height:11px;color:#1a1a1a;letter-spacing:-0.28px;"></div>
<div class="t" style="left:69px;top:535.8px;font-size:11px;line-height:11px;color:#1a1a1a;letter-spacing:-0.28px;">Time</div>
<div class="a" style="left:0px;top:549px;width:280px;height:1px;background:#b4b4b4"></div>
<div class="a" style="left:65px;top:549px;width:1px;height:17px;background:#b4b4b4"></div>
<div class="t" style="left:0px;top:552.6px;font-size:11px;line-height:11px;color:#1a1a1a;letter-spacing:-0.28px;">y Time</div>
<div class="t" style="left:69px;top:552.6px;font-size:11px;line-height:11px;color:#1a1a1a;letter-spacing:-0.28px;">Last</div>
<div class="a" style="left:0px;top:566px;width:280px;height:1px;background:#b4b4b4"></div>
<div class="a" style="left:65px;top:566px;width:1px;height:17px;background:#b4b4b4"></div>
<div class="t" style="left:0px;top:569.5px;font-size:11px;line-height:11px;color:#1a1a1a;letter-spacing:-0.28px;"> Time History</div>
<div class="t" style="left:69px;top:569.5px;font-size:11px;line-height:11px;color:#1a1a1a;letter-spacing:-0.28px;">Yes</div>
<div class="a" style="left:66px;top:584px;width:214px;height:16px;background:#e8e8e8"></div>
<div class="a" style="left:0px;top:583px;width:280px;height:1px;background:#b4b4b4"></div>
<div class="a" style="left:65px;top:583px;width:1px;height:17px;background:#b4b4b4"></div>
<div class="t" style="left:0px;top:586.3px;font-size:11px;line-height:11px;color:#1a1a1a;letter-spacing:-0.28px;"></div>
<div class="t" style="left:69px;top:586.3px;font-size:11px;line-height:11px;color:#1a1a1a;letter-spacing:-0.28px;"></div>
<div class="a" style="left:0px;top:600px;width:280px;height:1px;background:#b4b4b4"></div>
<div class="a" style="left:65px;top:600px;width:1px;height:17px;background:#b4b4b4"></div>
<div class="t" style="left:0px;top:603.2px;font-size:11px;line-height:11px;color:#1a1a1a;letter-spacing:-0.28px;">ed</div>
<div class="t" style="left:69px;top:603.2px;font-size:11px;line-height:11px;color:#1a1a1a;letter-spacing:-0.28px;">No</div>
<div class="a" style="left:0px;top:617px;width:280px;height:1px;background:#b4b4b4"></div>
<div class="t" style="left:0px;top:620.0px;font-size:11px;line-height:11px;font-weight:bold;color:#1a1a1a;">on Point Results</div>
<div class="a" style="left:0px;top:634px;width:280px;height:1px;background:#b4b4b4"></div>
<div class="a" style="left:65px;top:634px;width:1px;height:17px;background:#b4b4b4"></div>
<div class="t" style="left:0px;top:636.9px;font-size:11px;line-height:11px;color:#1a1a1a;letter-spacing:-0.28px;">ption</div>
<div class="t" style="left:69px;top:636.9px;font-size:11px;line-height:11px;color:#1a1a1a;letter-spacing:-0.28px;">Averaged</div>
<div class="a" style="left:0px;top:650px;width:280px;height:1px;background:#b4b4b4"></div>
<div class="a" style="left:65px;top:650px;width:1px;height:17px;background:#b4b4b4"></div>
<div class="t" style="left:0px;top:653.7px;font-size:11px;line-height:11px;color:#1a1a1a;letter-spacing:-0.28px;">erage Bodies</div>
<div class="t" style="left:69px;top:653.7px;font-size:11px;line-height:11px;color:#1a1a1a;letter-spacing:-0.28px;">No</div>
<div class="a" style="left:280px;top:448px;width:1px;height:210px;background:#b4b4b4"></div>
<div class="a" style="left:0px;top:658px;width:297px;height:5px;background:#f0f0f0"></div>
<div class="a" style="left:297px;top:135px;width:6px;height:527px;background:#f8f8f8"></div>
<div class="a" style="left:303px;top:135px;width:843px;height:383px;background:linear-gradient(#6a8bdb 0%,#8ba2e2 25%,#b3c1ec 50%,#dae0f5 75%,#fafbfe 100%);border-left:1px solid #505560;border-top:1px solid #5a6482"></div>
<div class="t" style="left:319px;top:153.9px;font-size:11px;line-height:11px;font-weight:bold;color:#0c1830;">A: Static Structural</div>
<div class="t" style="left:319px;top:168.9px;font-size:11px;line-height:11px;color:#0c1830;">Equivalent Stress</div>
<div class="t" style="left:319px;top:183.9px;font-size:11px;line-height:11px;color:#0c1830;">Type: Equivalent (von-Mises) Stress</div>
<div class="t" style="left:319px;top:198.9px;font-size:11px;line-height:11px;color:#0c1830;">Unit: MPa</div>
<div class="t" style="left:319px;top:213.9px;font-size:11px;line-height:11px;color:#0c1830;">Time: 0,73684</div>
<div class="t" style="left:319px;top:228.9px;font-size:11px;line-height:11px;color:#0c1830;">10.04.2018 15:32</div>
<svg class="a" style="left:319px;top:264px" width="16" height="153" viewBox="0 0 16 153"><rect x="0.5" y="0.50" width="15" height="16.9" fill="#ff0000" stroke="#222" stroke-width="1"/><rect x="0.5" y="17.40" width="15" height="16.9" fill="#ffaa00" stroke="#222" stroke-width="1"/><rect x="0.5" y="34.30" width="15" height="16.9" fill="#ffff00" stroke="#222" stroke-width="1"/><rect x="0.5" y="51.20" width="15" height="16.9" fill="#aaff00" stroke="#222" stroke-width="1"/><rect x="0.5" y="68.10" width="15" height="16.9" fill="#00ff00" stroke="#222" stroke-width="1"/><rect x="0.5" y="85.00" width="15" height="16.9" fill="#00ffaa" stroke="#222" stroke-width="1"/><rect x="0.5" y="101.90" width="15" height="16.9" fill="#00ffff" stroke="#222" stroke-width="1"/><rect x="0.5" y="118.80" width="15" height="16.9" fill="#00aaff" stroke="#222" stroke-width="1"/><rect x="0.5" y="135.70" width="15" height="16.9" fill="#0000ff" stroke="#222" stroke-width="1"/></svg>
<div class="t" style="left:344px;top:259.4px;font-size:11px;line-height:11px;font-weight:bold;color:#0c1830;">393,08 Max</div>
<div class="t" style="left:344px;top:276.0px;font-size:11px;line-height:11px;color:#0c1830;letter-spacing:-0.35px;">349,52</div>
<div class="t" style="left:344px;top:292.6px;font-size:11px;line-height:11px;color:#0c1830;letter-spacing:-0.35px;">305,96</div>
<div class="t" style="left:344px;top:309.2px;font-size:11px;line-height:11px;color:#0c1830;letter-spacing:-0.35px;">262,4</div>
<div class="t" style="left:344px;top:325.8px;font-size:11px;line-height:11px;color:#0c1830;letter-spacing:-0.35px;">218,83</div>
<div class="t" style="left:344px;top:342.4px;font-size:11px;line-height:11px;color:#0c1830;letter-spacing:-0.35px;">175,27</div>
<div class="t" style="left:344px;top:359.0px;font-size:11px;line-height:11px;color:#0c1830;letter-spacing:-0.35px;">131,71</div>
<div class="t" style="left:344px;top:375.6px;font-size:11px;line-height:11px;color:#0c1830;letter-spacing:-0.35px;">88,15</div>
<div class="t" style="left:344px;top:392.2px;font-size:11px;line-height:11px;color:#0c1830;letter-spacing:-0.35px;">44,588</div>
<div class="t" style="left:344px;top:408.8px;font-size:11px;line-height:11px;font-weight:bold;color:#0c1830;">1,0264 Min</div>
<div class="t" style="left:1112px;top:158.6px;font-size:27px;line-height:27px;font-weight:bold;color:#ffffff;transform:scaleX(0.86);transform-origin:0 0;letter-spacing:1px">ANSYS</div>
<svg class="a" style="left:930px;top:367px" width="32" height="32" viewBox="0 0 32 32"><g fill="#fff" stroke="#fff" stroke-width="2.5" stroke-linejoin="round"><path d="M4.5 5L4.5 12.5L12 12.5Z"/><path d="M25.5 17.5L25.5 24.5L18 17.5Z"/></g><g stroke="#fff" stroke-width="4.5"><path d="M7.5 9.5Q12 4.5 17 5Q20.5 5.5 22.5 9.5M7.5 20Q11 25 16 24.5Q19.5 24 22 20.5" fill="none"/></g><g fill="#000"><path d="M4.5 5L4.5 12.5L12 12.5Z"/><path d="M25.5 17.5L25.5 24.5L18 17.5Z"/></g><g stroke="#000" stroke-width="2.2"><path d="M7.5 9.5Q12 4.5 17 5Q20.5 5.5 22.5 9.5M7.5 20Q11 25 16 24.5Q19.5 24 22 20.5" fill="none"/></g></svg>
<svg class="a" style="left:1080px;top:385px" width="70" height="75" viewBox="0 0 70 75"><text x="63" y="14" font-size="11" fill="#e03030" font-family="Liberation Sans">X</text><path d="M62.5 32v30" stroke="#c01010" stroke-width="2.5"/><path d="M59 33l3.5-11 3.5 11z" fill="#d01010"/><path d="M24 68.5h38" stroke="#107010" stroke-width="3"/><path d="M13 68.5l11-5v10z" fill="#107010"/><text x="5" y="68" font-size="11" fill="#30a030" font-family="Liberation Sans">Y</text><defs><radialGradient id="sc" cx="0.4" cy="0.35" r="0.7"><stop offset="0" stop-color="#60e0e8"/><stop offset="1" stop-color="#109098"/></radialGradient><radialGradient id="sb" cx="0.4" cy="0.35" r="0.7"><stop offset="0" stop-color="#3050e0"/><stop offset="1" stop-color="#0a1070"/></radialGradient></defs><circle cx="40" cy="44.5" r="5" fill="url(#sc)"/><circle cx="62" cy="66.5" r="5.2" fill="url(#sb)"/></svg>
<svg class="a" style="left:0px;top:0px" width="1146" height="720" viewBox="0 0 1146 720"><defs><linearGradient id="gl" x1="0" y1="0" x2="0" y2="1"><stop offset="0" stop-color="#1a40c0"/><stop offset="0.1" stop-color="#2a90c8"/><stop offset="0.25" stop-color="#30b0c0"/><stop offset="0.65" stop-color="#30b0b0"/><stop offset="0.78" stop-color="#48b888"/><stop offset="0.86" stop-color="#58c048"/><stop offset="0.95" stop-color="#40a890"/><stop offset="1" stop-color="#1a2a90"/></linearGradient><linearGradient id="gr" x1="0" y1="0" x2="0" y2="1"><stop offset="0" stop-color="#1a40c0"/><stop offset="0.1" stop-color="#2a90c8"/><stop offset="0.25" stop-color="#30b0c0"/><stop offset="0.7" stop-color="#30b8c0"/><stop offset="0.85" stop-color="#40c0a0"/><stop offset="0.93" stop-color="#50c050"/><stop offset="1" stop-color="#1a2a90"/></linearGradient><linearGradient id="ge" x1="0" y1="0" x2="0" y2="1"><stop offset="0" stop-color="#1428c8" stop-opacity="1"/><stop offset="0.5" stop-color="#1838c8" stop-opacity="0.8"/><stop offset="1" stop-color="#1838c8" stop-opacity="0"/></linearGradient></defs><polygon points="751.0,213.0 765.6,213.0 764.1,221.3" fill="#193fc8" stroke="#193fc8" stroke-width="0.3"/><polygon points="751.0,213.0 764.1,221.3 749.5,221.3" fill="#183cc8" stroke="#183cc8" stroke-width="0.3"/><polygon points="749.5,221.3 764.1,221.3 762.6,229.5" fill="#1d4fc8" stroke="#1d4fc8" stroke-width="0.3"/><polygon points="749.5,221.3 762.6,229.5 747.9,229.5" fill="#1a46c8" stroke="#1a46c8" stroke-width="0.3"/><polygon points="747.9,229.5 762.6,229.5 761.1,237.8" fill="#215fc8" stroke="#215fc8" stroke-width="0.3"/><polygon points="747.9,229.5 761.1,237.8 746.4,237.8" fill="#1c50c8" stroke="#1c50c8" stroke-width="0.3"/><polygon points="746.4,237.8 761.1,237.8 759.5,246.1" fill="#256ec8" stroke="#256ec8" stroke-width="0.3"/><polygon points="746.4,237.8 759.5,246.1 744.8,246.1" fill="#1e5ac8" stroke="#1e5ac8" stroke-width="0.3"/><polygon points="744.8,246.1 759.5,246.1 758.0,254.3" fill="#287dc8" stroke="#287dc8" stroke-width="0.3"/><polygon points="744.8,246.1 758.0,254.3 743.2,254.3" fill="#2067c7" stroke="#2067c7" stroke-width="0.3"/><polygon points="743.2,254.3 758.0,254.3 756.4,262.6" fill="#2b8cc8" stroke="#2b8cc8" stroke-width="0.3"/><polygon points="743.2,254.3 756.4,262.6 741.6,262.6" fill="#237ac4" stroke="#237ac4" stroke-width="0.3"/><polygon points="741.6,262.6 756.4,262.6 754.8,270.9" fill="#2d9ac8" stroke="#2d9ac8" stroke-width="0.3"/><polygon points="741.6,262.6 754.8,270.9 740.0,270.9" fill="#258dc2" stroke="#258dc2" stroke-width="0.3"/><polygon points="740.0,270.9 754.8,270.9 753.3,279.1" fill="#30a8c7" stroke="#30a8c7" stroke-width="0.3"/><polygon points="740.0,270.9 753.3,279.1 738.4,279.1" fill="#28a0bf" stroke="#28a0bf" stroke-width="0.3"/><polygon points="738.4,279.1 753.3,279.1 751.7,287.4" fill="#30a8c7" stroke="#30a8c7" stroke-width="0.3"/><polygon points="738.4,279.1 751.7,287.4 736.8,287.4" fill="#28a1be" stroke="#28a1be" stroke-width="0.3"/><polygon points="736.8,287.4 751.7,287.4 750.1,295.6" fill="#30a9c6" stroke="#30a9c6" stroke-width="0.3"/><polygon points="736.8,287.4 750.1,295.6 735.2,295.6" fill="#29a3bc" stroke="#29a3bc" stroke-width="0.3"/><polygon points="735.2,295.6 750.1,295.6 748.5,303.9" fill="#30aac5" stroke="#30aac5" stroke-width="0.3"/><polygon points="735.2,295.6 748.5,303.9 733.5,303.9" fill="#2aa5ba" stroke="#2aa5ba" stroke-width="0.3"/><polygon points="733.5,303.9 748.5,303.9 746.9,312.2" fill="#30abc4" stroke="#30abc4" stroke-width="0.3"/><polygon points="733.5,303.9 746.9,312.2 731.9,312.2" fill="#2ba6b9" stroke="#2ba6b9" stroke-width="0.3"/><polygon points="731.9,312.2 746.9,312.2 745.2,320.4" fill="#30acc3" stroke="#30acc3" stroke-width="0.3"/><polygon points="731.9,312.2 745.2,320.4 730.2,320.4" fill="#2ca8b7" stroke="#2ca8b7" stroke-width="0.3"/><polygon points="730.2,320.4 745.2,320.4 743.6,328.7" fill="#30adc2" stroke="#30adc2" stroke-width="0.3"/><polygon points="730.2,320.4 743.6,328.7 728.6,328.7" fill="#2daab5" stroke="#2daab5" stroke-width="0.3"/><polygon points="728.6,328.7 743.6,328.7 741.9,337.0" fill="#30adc2" stroke="#30adc2" stroke-width="0.3"/><polygon points="728.6,328.7 741.9,337.0 726.9,337.0" fill="#2dabb4" stroke="#2dabb4" stroke-width="0.3"/><polygon points="726.9,337.0 741.9,337.0 740.3,345.2" fill="#30aec1" stroke="#30aec1" stroke-width="0.3"/><polygon points="726.9,337.0 740.3,345.2 725.2,345.2" fill="#2eadb2" stroke="#2eadb2" stroke-width="0.3"/><polygon points="725.2,345.2 740.3,345.2 738.6,353.5" fill="#30afc0" stroke="#30afc0" stroke-width="0.3"/><polygon points="725.2,345.2 738.6,353.5 723.5,353.5" fill="#2fafb0" stroke="#2fafb0" stroke-width="0.3"/><polygon points="723.5,353.5 738.6,353.5 736.9,361.8" fill="#30afbe" stroke="#30afbe" stroke-width="0.3"/><polygon points="723.5,353.5 736.9,361.8 721.8,361.8" fill="#31b0ab" stroke="#31b0ab" stroke-width="0.3"/><polygon points="721.8,361.8 736.9,361.8 735.2,370.0" fill="#30aebc" stroke="#30aebc" stroke-width="0.3"/><polygon points="721.8,361.8 735.2,370.0 720.1,370.0" fill="#34b2a1" stroke="#34b2a1" stroke-width="0.3"/><polygon points="720.1,370.0 735.2,370.0 733.5,378.3" fill="#30adba" stroke="#30adba" stroke-width="0.3"/><polygon points="720.1,370.0 733.5,378.3 718.3,378.3" fill="#37b398" stroke="#37b398" stroke-width="0.3"/><polygon points="718.3,378.3 733.5,378.3 731.8,386.6" fill="#30abb7" stroke="#30abb7" stroke-width="0.3"/><polygon points="718.3,378.3 731.8,386.6 716.6,386.6" fill="#3ab58f" stroke="#3ab58f" stroke-width="0.3"/><polygon points="716.6,386.6 731.8,386.6 730.1,394.8" fill="#30aab5" stroke="#30aab5" stroke-width="0.3"/><polygon points="716.6,386.6 730.1,394.8 714.8,394.8" fill="#3eb785" stroke="#3eb785" stroke-width="0.3"/><polygon points="714.8,394.8 730.1,394.8 728.4,403.1" fill="#30a9b3" stroke="#30a9b3" stroke-width="0.3"/><polygon points="714.8,394.8 728.4,403.1 713.1,403.1" fill="#41b87b" stroke="#41b87b" stroke-width="0.3"/><polygon points="713.1,403.1 728.4,403.1 726.6,411.4" fill="#30a8b0" stroke="#30a8b0" stroke-width="0.3"/><polygon points="713.1,403.1 726.6,411.4 711.3,411.4" fill="#46ba70" stroke="#46ba70" stroke-width="0.3"/><polygon points="711.3,411.4 726.6,411.4 724.9,419.6" fill="#30a7b0" stroke="#30a7b0" stroke-width="0.3"/><polygon points="711.3,411.4 724.9,419.6 709.5,419.6" fill="#4bbb65" stroke="#4bbb65" stroke-width="0.3"/><polygon points="709.5,419.6 724.9,419.6 723.1,427.9" fill="#30a5b0" stroke="#30a5b0" stroke-width="0.3"/><polygon points="709.5,419.6 723.1,427.9 707.7,427.9" fill="#50bd5a" stroke="#50bd5a" stroke-width="0.3"/><polygon points="707.7,427.9 723.1,427.9 721.3,436.1" fill="#30a4b0" stroke="#30a4b0" stroke-width="0.3"/><polygon points="707.7,427.9 721.3,436.1 705.9,436.1" fill="#54be4f" stroke="#54be4f" stroke-width="0.3"/><polygon points="705.9,436.1 721.3,436.1 719.5,444.4" fill="#30a3b0" stroke="#30a3b0" stroke-width="0.3"/><polygon points="705.9,436.1 719.5,444.4 704.1,444.4" fill="#55be4b" stroke="#55be4b" stroke-width="0.3"/><polygon points="704.1,444.4 719.5,444.4 717.7,452.7" fill="#30a1b0" stroke="#30a1b0" stroke-width="0.3"/><polygon points="704.1,444.4 717.7,452.7 702.3,452.7" fill="#4eb957" stroke="#4eb957" stroke-width="0.3"/><polygon points="702.3,452.7 717.7,452.7 715.9,460.9" fill="#30a0b0" stroke="#30a0b0" stroke-width="0.3"/><polygon points="702.3,452.7 715.9,460.9 700.4,460.9" fill="#47b563" stroke="#47b563" stroke-width="0.3"/><polygon points="700.4,460.9 715.9,460.9 714.1,469.2" fill="#2c88b0" stroke="#2c88b0" stroke-width="0.3"/><polygon points="700.4,460.9 714.1,469.2 698.6,469.2" fill="#40b06e" stroke="#40b06e" stroke-width="0.3"/><polygon points="698.6,469.2 714.1,469.2 712.3,477.5" fill="#2560b0" stroke="#2560b0" stroke-width="0.3"/><polygon points="698.6,469.2 712.3,477.5 696.7,477.5" fill="#2f7d91" stroke="#2f7d91" stroke-width="0.3"/><polygon points="696.7,477.5 712.3,477.5 710.4,485.7" fill="#1e3bac" stroke="#1e3bac" stroke-width="0.3"/><polygon points="696.7,477.5 710.4,485.7 694.9,485.7" fill="#1e49ac" stroke="#1e49ac" stroke-width="0.3"/><polygon points="694.9,485.7 710.4,485.7 708.6,494.0" fill="#142399" stroke="#142399" stroke-width="0.3"/><polygon points="694.9,485.7 708.6,494.0 693.0,494.0" fill="#142899" stroke="#142899" stroke-width="0.3"/><polygon points="751.0,213.0 749.5,221.3 747.9,229.5 746.4,237.8 744.8,246.1 743.2,254.3 741.6,262.6 740.0,270.9 738.4,279.1 736.8,287.4 735.2,295.6 733.5,303.9 731.9,312.2 730.2,320.4 728.6,328.7 726.9,337.0 725.2,345.2 725.2,345.2 727.2,337.0 729.2,328.7 731.2,320.4 733.1,312.2 735.1,303.9 737.1,295.6 739.0,287.4 740.9,279.1 742.9,270.9 744.8,262.6 746.7,254.3 748.5,246.1 750.4,237.8 752.3,229.5 754.2,221.3 756.0,213.0" fill="#1838c8" opacity="0.6"/><polygon points="765.6,213.0 764.1,221.3 762.6,229.5 761.1,237.8 759.5,246.1 758.0,254.3 756.4,262.6 754.8,270.9 753.3,279.1 751.7,287.4 750.1,295.6 748.5,303.9 746.9,312.2 745.2,320.4 743.6,328.7 741.9,337.0 740.3,345.2 738.6,353.5 736.9,361.8 735.2,370.0 733.5,378.3 731.8,386.6 730.1,394.8 728.4,403.1 726.6,411.4 724.9,419.6 723.1,427.9 721.3,436.1 719.5,444.4 717.7,452.7 715.9,460.9 714.1,469.2 712.3,477.5 710.4,485.7 708.6,494.0 706.1,494.0 707.9,485.7 709.8,477.5 711.6,469.2 713.4,460.9 715.2,452.7 717.0,444.4 718.8,436.1 720.6,427.9 722.4,419.6 724.1,411.4 725.9,403.1 727.6,394.8 729.3,386.6 731.0,378.3 732.7,370.0 734.4,361.8 736.1,353.5 737.8,345.2 739.4,337.0 741.1,328.7 742.7,320.4 744.4,312.2 746.0,303.9 747.6,295.6 749.2,287.4 750.8,279.1 752.3,270.9 753.9,262.6 755.5,254.3 757.0,246.1 758.6,237.8 760.1,229.5 761.6,221.3 763.1,213.0" fill="#0a1a70" opacity="0.75"/><path d="M751.0 213.0L765.6 213.0M751.0 213.0L764.1 221.3M749.5 221.3L764.1 221.3M749.5 221.3L762.6 229.5M747.9 229.5L762.6 229.5M747.9 229.5L761.1 237.8M746.4 237.8L761.1 237.8M746.4 237.8L759.5 246.1M744.8 246.1L759.5 246.1M744.8 246.1L758.0 254.3M743.2 254.3L758.0 254.3M743.2 254.3L756.4 262.6M741.6 262.6L756.4 262.6M741.6 262.6L754.8 270.9M740.0 270.9L754.8 270.9M740.0 270.9L753.3 279.1M738.4 279.1L753.3 279.1M738.4 279.1L751.7 287.4M736.8 287.4L751.7 287.4M736.8 287.4L750.1 295.6M735.2 295.6L750.1 295.6M735.2 295.6L748.5 303.9M733.5 303.9L748.5 303.9M733.5 303.9L746.9 312.2M731.9 312.2L746.9 312.2M731.9 312.2L745.2 320.4M730.2 320.4L745.2 320.4M730.2 320.4L743.6 328.7M728.6 328.7L743.6 328.7M728.6 328.7L741.9 337.0M726.9 337.0L741.9 337.0M726.9 337.0L740.3 345.2M725.2 345.2L740.3 345.2M725.2 345.2L738.6 353.5M723.5 353.5L738.6 353.5M723.5 353.5L736.9 361.8M721.8 361.8L736.9 361.8M721.8 361.8L735.2 370.0M720.1 370.0L735.2 370.0M720.1 370.0L733.5 378.3M718.3 378.3L733.5 378.3M718.3 378.3L731.8 386.6M716.6 386.6L731.8 386.6M716.6 386.6L730.1 394.8M714.8 394.8L730.1 394.8M714.8 394.8L728.4 403.1M713.1 403.1L728.4 403.1M713.1 403.1L726.6 411.4M711.3 411.4L726.6 411.4M711.3 411.4L724.9 419.6M709.5 419.6L724.9 419.6M709.5 419.6L723.1 427.9M707.7 427.9L723.1 427.9M707.7 427.9L721.3 436.1M705.9 436.1L721.3 436.1M705.9 436.1L719.5 444.4M704.1 444.4L719.5 444.4M704.1 444.4L717.7 452.7M702.3 452.7L717.7 452.7M702.3 452.7L715.9 460.9M700.4 460.9L715.9 460.9M700.4 460.9L714.1 469.2M698.6 469.2L714.1 469.2M698.6 469.2L712.3 477.5M696.7 477.5L712.3 477.5M696.7 477.5L710.4 485.7M694.9 485.7L710.4 485.7M694.9 485.7L708.6 494.0" stroke="#081820" stroke-width="1" fill="none" opacity="0.9"/><polygon points="751.0,213.0 749.5,221.3 747.9,229.5 746.4,237.8 744.8,246.1 743.2,254.3 741.6,262.6 740.0,270.9 738.4,279.1 736.8,287.4 735.2,295.6 733.5,303.9 731.9,312.2 730.2,320.4 728.6,328.7 726.9,337.0 725.2,345.2 723.5,353.5 721.8,361.8 720.1,370.0 718.3,378.3 716.6,386.6 714.8,394.8 713.1,403.1 711.3,411.4 709.5,419.6 707.7,427.9 705.9,436.1 704.1,444.4 702.3,452.7 700.4,460.9 698.6,469.2 696.7,477.5 694.9,485.7 693.0,494.0 708.6,494.0 710.4,485.7 712.3,477.5 714.1,469.2 715.9,460.9 717.7,452.7 719.5,444.4 721.3,436.1 723.1,427.9 724.9,419.6 726.6,411.4 728.4,403.1 730.1,394.8 731.8,386.6 733.5,378.3 735.2,370.0 736.9,361.8 738.6,353.5 740.3,345.2 741.9,337.0 743.6,328.7 745.2,320.4 746.9,312.2 748.5,303.9 750.1,295.6 751.7,287.4 753.3,279.1 754.8,270.9 756.4,262.6 758.0,254.3 759.5,246.1 761.1,237.8 762.6,229.5 764.1,221.3 765.6,213.0" fill="none" stroke="#0a1830" stroke-width="0.8"/><polygon points="783.9,213.0 798.8,221.3 784.4,221.3" fill="#183ec8" stroke="#183ec8" stroke-width="0.3"/><polygon points="783.9,213.0 798.3,213.0 798.8,221.3" fill="#183ec8" stroke="#183ec8" stroke-width="0.3"/><polygon points="784.4,221.3 799.3,229.6 784.9,229.6" fill="#1a4cc8" stroke="#1a4cc8" stroke-width="0.3"/><polygon points="784.4,221.3 798.8,221.3 799.3,229.6" fill="#1a4cc8" stroke="#1a4cc8" stroke-width="0.3"/><polygon points="784.9,229.6 799.9,237.9 785.3,237.9" fill="#1c5ac8" stroke="#1c5ac8" stroke-width="0.3"/><polygon points="784.9,229.6 799.3,229.6 799.9,237.9" fill="#1c5ac8" stroke="#1c5ac8" stroke-width="0.3"/><polygon points="785.3,237.9 800.4,246.2 785.8,246.2" fill="#1e68c8" stroke="#1e68c8" stroke-width="0.3"/><polygon points="785.3,237.9 799.9,237.9 800.4,246.2" fill="#1e68c8" stroke="#1e68c8" stroke-width="0.3"/><polygon points="785.8,246.2 800.9,254.5 786.3,254.5" fill="#2176c8" stroke="#2176c8" stroke-width="0.3"/><polygon points="785.8,246.2 800.4,246.2 800.9,254.5" fill="#2177c7" stroke="#2177c7" stroke-width="0.3"/><polygon points="786.3,254.5 801.5,262.8 786.8,262.8" fill="#2687c8" stroke="#2687c8" stroke-width="0.3"/><polygon points="786.3,254.5 800.9,254.5 801.5,262.8" fill="#268ac4" stroke="#268ac4" stroke-width="0.3"/><polygon points="786.8,262.8 802.0,271.1 787.3,271.1" fill="#2b97c8" stroke="#2b97c8" stroke-width="0.3"/><polygon points="786.8,262.8 801.5,262.8 802.0,271.1" fill="#2b9dc2" stroke="#2b9dc2" stroke-width="0.3"/><polygon points="787.3,271.1 802.6,279.4 787.8,279.4" fill="#30a8c7" stroke="#30a8c7" stroke-width="0.3"/><polygon points="787.3,271.1 802.0,271.1 802.6,279.4" fill="#30b0bf" stroke="#30b0bf" stroke-width="0.3"/><polygon points="787.8,279.4 803.1,287.6 788.3,287.6" fill="#30a8c7" stroke="#30a8c7" stroke-width="0.3"/><polygon points="787.8,279.4 802.6,279.4 803.1,287.6" fill="#30b0bf" stroke="#30b0bf" stroke-width="0.3"/><polygon points="788.3,287.6 803.7,295.9 788.8,295.9" fill="#30a9c6" stroke="#30a9c6" stroke-width="0.3"/><polygon points="788.3,287.6 803.1,287.6 803.7,295.9" fill="#30b1be" stroke="#30b1be" stroke-width="0.3"/><polygon points="788.8,295.9 804.2,304.2 789.3,304.2" fill="#30a9c6" stroke="#30a9c6" stroke-width="0.3"/><polygon points="788.8,295.9 803.7,295.9 804.2,304.2" fill="#30b2bd" stroke="#30b2bd" stroke-width="0.3"/><polygon points="789.3,304.2 804.8,312.5 789.8,312.5" fill="#30aac5" stroke="#30aac5" stroke-width="0.3"/><polygon points="789.3,304.2 804.2,304.2 804.8,312.5" fill="#30b2bd" stroke="#30b2bd" stroke-width="0.3"/><polygon points="789.8,312.5 805.4,320.8 790.3,320.8" fill="#30abc4" stroke="#30abc4" stroke-width="0.3"/><polygon points="789.8,312.5 804.8,312.5 805.4,320.8" fill="#30b3bc" stroke="#30b3bc" stroke-width="0.3"/><polygon points="790.3,320.8 805.9,329.1 790.9,329.1" fill="#30abc4" stroke="#30abc4" stroke-width="0.3"/><polygon points="790.3,320.8 805.4,320.8 805.9,329.1" fill="#30b4bb" stroke="#30b4bb" stroke-width="0.3"/><polygon points="790.9,329.1 806.5,337.4 791.4,337.4" fill="#30acc3" stroke="#30acc3" stroke-width="0.3"/><polygon points="790.9,329.1 805.9,329.1 806.5,337.4" fill="#30b5ba" stroke="#30b5ba" stroke-width="0.3"/><polygon points="791.4,337.4 807.1,345.7 791.9,345.7" fill="#30acc3" stroke="#30acc3" stroke-width="0.3"/><polygon points="791.4,337.4 806.5,337.4 807.1,345.7" fill="#30b5ba" stroke="#30b5ba" stroke-width="0.3"/><polygon points="791.9,345.7 807.6,354.0 792.5,354.0" fill="#30adc2" stroke="#30adc2" stroke-width="0.3"/><polygon points="791.9,345.7 807.1,345.7 807.6,354.0" fill="#30b6b9" stroke="#30b6b9" stroke-width="0.3"/><polygon points="792.5,354.0 808.2,362.3 793.0,362.3" fill="#30aec1" stroke="#30aec1" stroke-width="0.3"/><polygon points="792.5,354.0 807.6,354.0 808.2,362.3" fill="#30b7b8" stroke="#30b7b8" stroke-width="0.3"/><polygon points="793.0,362.3 808.8,370.6 793.5,370.6" fill="#30aec1" stroke="#30aec1" stroke-width="0.3"/><polygon points="793.0,362.3 808.2,362.3 808.8,370.6" fill="#30b7b8" stroke="#30b7b8" stroke-width="0.3"/><polygon points="793.5,370.6 809.4,378.9 794.1,378.9" fill="#30afc0" stroke="#30afc0" stroke-width="0.3"/><polygon points="793.5,370.6 808.8,370.6 809.4,378.9" fill="#32b9b0" stroke="#32b9b0" stroke-width="0.3"/><polygon points="794.1,378.9 810.0,387.2 794.6,387.2" fill="#30afbf" stroke="#30afbf" stroke-width="0.3"/><polygon points="794.1,378.9 809.4,378.9 810.0,387.2" fill="#34baa6" stroke="#34baa6" stroke-width="0.3"/><polygon points="794.6,387.2 810.6,395.5 795.2,395.5" fill="#30aebe" stroke="#30aebe" stroke-width="0.3"/><polygon points="794.6,387.2 810.0,387.2 810.6,395.5" fill="#37bb9c" stroke="#37bb9c" stroke-width="0.3"/><polygon points="795.2,395.5 811.2,403.8 795.7,403.8" fill="#30aebe" stroke="#30aebe" stroke-width="0.3"/><polygon points="795.2,395.5 810.6,395.5 811.2,403.8" fill="#3abd93" stroke="#3abd93" stroke-width="0.3"/><polygon points="795.7,403.8 811.8,412.1 796.3,412.1" fill="#30adbd" stroke="#30adbd" stroke-width="0.3"/><polygon points="795.7,403.8 811.2,403.8 811.8,412.1" fill="#3dbe89" stroke="#3dbe89" stroke-width="0.3"/><polygon points="796.3,412.1 812.4,420.4 796.8,420.4" fill="#30acbc" stroke="#30acbc" stroke-width="0.3"/><polygon points="796.3,412.1 811.8,412.1 812.4,420.4" fill="#40c07f" stroke="#40c07f" stroke-width="0.3"/><polygon points="796.8,420.4 813.0,428.6 797.4,428.6" fill="#30abbb" stroke="#30abbb" stroke-width="0.3"/><polygon points="796.8,420.4 812.4,420.4 813.0,428.6" fill="#43c074" stroke="#43c074" stroke-width="0.3"/><polygon points="797.4,428.6 813.6,436.9 797.9,436.9" fill="#30aaba" stroke="#30aaba" stroke-width="0.3"/><polygon points="797.4,428.6 813.0,428.6 813.6,436.9" fill="#47c06a" stroke="#47c06a" stroke-width="0.3"/><polygon points="797.9,436.9 814.2,445.2 798.5,445.2" fill="#30a9b9" stroke="#30a9b9" stroke-width="0.3"/><polygon points="797.9,436.9 813.6,436.9 814.2,445.2" fill="#4ac05f" stroke="#4ac05f" stroke-width="0.3"/><polygon points="798.5,445.2 814.9,453.5 799.1,453.5" fill="#30a8b8" stroke="#30a8b8" stroke-width="0.3"/><polygon points="798.5,445.2 814.2,445.2 814.9,453.5" fill="#4ec054" stroke="#4ec054" stroke-width="0.3"/><polygon points="799.1,453.5 815.5,461.8 799.7,461.8" fill="#2c98b6" stroke="#2c98b6" stroke-width="0.3"/><polygon points="799.1,453.5 814.9,453.5 815.5,461.8" fill="#4cba5a" stroke="#4cba5a" stroke-width="0.3"/><polygon points="799.7,461.8 816.1,470.1 800.2,470.1" fill="#267db3" stroke="#267db3" stroke-width="0.3"/><polygon points="799.7,461.8 815.5,461.8 816.1,470.1" fill="#46b16c" stroke="#46b16c" stroke-width="0.3"/><polygon points="800.2,470.1 816.7,478.4 800.8,478.4" fill="#2063b0" stroke="#2063b0" stroke-width="0.3"/><polygon points="800.2,470.1 816.1,470.1 816.7,478.4" fill="#40a97d" stroke="#40a97d" stroke-width="0.3"/><polygon points="800.8,478.4 817.4,486.7 801.4,486.7" fill="#1a45a4" stroke="#1a45a4" stroke-width="0.3"/><polygon points="800.8,478.4 816.7,478.4 817.4,486.7" fill="#2e7285" stroke="#2e7285" stroke-width="0.3"/><polygon points="801.4,486.7 818.0,495.0 802.0,495.0" fill="#132796" stroke="#132796" stroke-width="0.3"/><polygon points="801.4,486.7 817.4,486.7 818.0,495.0" fill="#1a368c" stroke="#1a368c" stroke-width="0.3"/><polygon points="798.3,213.0 798.8,221.3 799.3,229.6 799.9,237.9 800.4,246.2 800.9,254.5 801.5,262.8 802.0,271.1 802.6,279.4 803.1,287.6 803.7,295.9 804.2,304.2 804.8,312.5 805.4,320.8 805.9,329.1 806.5,337.4 806.5,337.4 805.6,329.1 804.7,320.8 803.8,312.5 802.9,304.2 802.0,295.9 801.1,287.6 800.2,279.4 799.4,271.1 798.5,262.8 797.6,254.5 796.7,246.2 795.9,237.9 795.0,229.6 794.2,221.3 793.3,213.0" fill="#1838c8" opacity="0.55"/><polygon points="783.9,213.0 784.4,221.3 784.9,229.6 785.3,237.9 785.8,246.2 786.3,254.5 786.8,262.8 787.3,271.1 787.8,279.4 788.3,287.6 788.8,295.9 789.3,304.2 789.8,312.5 790.3,320.8 790.9,329.1 791.4,337.4 791.9,345.7 792.5,354.0 793.0,362.3 793.5,370.6 794.1,378.9 794.6,387.2 795.2,395.5 795.7,403.8 796.3,412.1 796.8,420.4 797.4,428.6 797.9,436.9 798.5,445.2 799.1,453.5 799.7,461.8 800.2,470.1 800.8,478.4 801.4,486.7 802.0,495.0 804.5,495.0 803.9,486.7 803.3,478.4 802.7,470.1 802.2,461.8 801.6,453.5 801.0,445.2 800.4,436.9 799.9,428.6 799.3,420.4 798.8,412.1 798.2,403.8 797.7,395.5 797.1,387.2 796.6,378.9 796.0,370.6 795.5,362.3 795.0,354.0 794.4,345.7 793.9,337.4 793.4,329.1 792.8,320.8 792.3,312.5 791.8,304.2 791.3,295.9 790.8,287.6 790.3,279.4 789.8,271.1 789.3,262.8 788.8,254.5 788.3,246.2 787.8,237.9 787.4,229.6 786.9,221.3 786.4,213.0" fill="#0a1a70" opacity="0.75"/><path d="M798.3 213.0L783.9 213.0M783.9 213.0L798.8 221.3M798.8 221.3L784.4 221.3M784.4 221.3L799.3 229.6M799.3 229.6L784.9 229.6M784.9 229.6L799.9 237.9M799.9 237.9L785.3 237.9M785.3 237.9L800.4 246.2M800.4 246.2L785.8 246.2M785.8 246.2L800.9 254.5M800.9 254.5L786.3 254.5M786.3 254.5L801.5 262.8M801.5 262.8L786.8 262.8M786.8 262.8L802.0 271.1M802.0 271.1L787.3 271.1M787.3 271.1L802.6 279.4M802.6 279.4L787.8 279.4M787.8 279.4L803.1 287.6M803.1 287.6L788.3 287.6M788.3 287.6L803.7 295.9M803.7 295.9L788.8 295.9M788.8 295.9L804.2 304.2M804.2 304.2L789.3 304.2M789.3 304.2L804.8 312.5M804.8 312.5L789.8 312.5M789.8 312.5L805.4 320.8M805.4 320.8L790.3 320.8M790.3 320.8L805.9 329.1M805.9 329.1L790.9 329.1M790.9 329.1L806.5 337.4M806.5 337.4L791.4 337.4M791.4 337.4L807.1 345.7M807.1 345.7L791.9 345.7M791.9 345.7L807.6 354.0M807.6 354.0L792.5 354.0M792.5 354.0L808.2 362.3M808.2 362.3L793.0 362.3M793.0 362.3L808.8 370.6M808.8 370.6L793.5 370.6M793.5 370.6L809.4 378.9M809.4 378.9L794.1 378.9M794.1 378.9L810.0 387.2M810.0 387.2L794.6 387.2M794.6 387.2L810.6 395.5M810.6 395.5L795.2 395.5M795.2 395.5L811.2 403.8M811.2 403.8L795.7 403.8M795.7 403.8L811.8 412.1M811.8 412.1L796.3 412.1M796.3 412.1L812.4 420.4M812.4 420.4L796.8 420.4M796.8 420.4L813.0 428.6M813.0 428.6L797.4 428.6M797.4 428.6L813.6 436.9M813.6 436.9L797.9 436.9M797.9 436.9L814.2 445.2M814.2 445.2L798.5 445.2M798.5 445.2L814.9 453.5M814.9 453.5L799.1 453.5M799.1 453.5L815.5 461.8M815.5 461.8L799.7 461.8M799.7 461.8L816.1 470.1M816.1 470.1L800.2 470.1M800.2 470.1L816.7 478.4M816.7 478.4L800.8 478.4M800.8 478.4L817.4 486.7M817.4 486.7L801.4 486.7M801.4 486.7L818.0 495.0" stroke="#081820" stroke-width="1" fill="none" opacity="0.9"/><polygon points="798.3,213.0 798.8,221.3 799.3,229.6 799.9,237.9 800.4,246.2 800.9,254.5 801.5,262.8 802.0,271.1 802.6,279.4 803.1,287.6 803.7,295.9 804.2,304.2 804.8,312.5 805.4,320.8 805.9,329.1 806.5,337.4 807.1,345.7 807.6,354.0 808.2,362.3 808.8,370.6 809.4,378.9 810.0,387.2 810.6,395.5 811.2,403.8 811.8,412.1 812.4,420.4 813.0,428.6 813.6,436.9 814.2,445.2 814.9,453.5 815.5,461.8 816.1,470.1 816.7,478.4 817.4,486.7 818.0,495.0 802.0,495.0 801.4,486.7 800.8,478.4 800.2,470.1 799.7,461.8 799.1,453.5 798.5,445.2 797.9,436.9 797.4,428.6 796.8,420.4 796.3,412.1 795.7,403.8 795.2,395.5 794.6,387.2 794.1,378.9 793.5,370.6 793.0,362.3 792.5,354.0 791.9,345.7 791.4,337.4 790.9,329.1 790.3,320.8 789.8,312.5 789.3,304.2 788.8,295.9 788.3,287.6 787.8,279.4 787.3,271.1 786.8,262.8 786.3,254.5 785.8,246.2 785.3,237.9 784.9,229.6 784.4,221.3 783.9,213.0" fill="none" stroke="#0a1830" stroke-width="0.8"/><polygon points="693.5,490 708.5,490 708.6,494.5 693,494.5" fill="#080c50"/><polygon points="802,491 817.5,491 818,495.5 802,495.5" fill="#080c50"/><polygon points="766,163 784,163 784,184.4 788,184.4 798.3,213 798.3,223.3 783.9,223.3 783.9,223.3 765.6,223.3 751.7,223.3 751.7,213 761.7,184.4 766,184.4" fill="#0a12b0" stroke="#020830" stroke-width="1"/><path d="M766 163.0H784M766 168.3H784M766 173.7H784M766 179.1H784M766 184.4H784M766 163V184.4M772 163V184.4M778 163V184.4M784 163V184.4M766 163.0L772 168.3M778 163.0L772 168.3M778 163.0L784 168.3M772 168.3L766 173.7M772 168.3L778 173.7M784 168.3L778 173.7M766 173.7L772 179.0M778 173.7L772 179.0M778 173.7L784 179.0M772 179.1L766 184.4M772 179.1L778 184.4M784 179.1L778 184.4M761.7 184.4H787.8M759.4 191.0H790.2M756.9 198.0H792.8M754.3 205.5H795.5M751.7 213.0H798.3M751.7 223.3H798.3M761.7 184.4L759.4 191.0M761.7 184.4L764.5 191.0M766.1 184.4L764.5 191.0M770.4 184.4L764.5 191.0M770.4 184.4L769.7 191.0M770.4 184.4L774.8 191.0M774.8 184.4L774.8 191.0M779.1 184.4L774.8 191.0M779.1 184.4L779.9 191.0M779.1 184.4L785.1 191.0M783.4 184.4L785.1 191.0M787.8 184.4L785.1 191.0M787.8 184.4L790.2 191.0M759.4 191.0L756.9 198.0M764.5 191.0L756.9 198.0M764.5 191.0L762.9 198.0M764.5 191.0L768.9 198.0M769.7 191.0L768.9 198.0M774.8 191.0L768.9 198.0M774.8 191.0L774.9 198.0M774.8 191.0L780.8 198.0M779.9 191.0L780.8 198.0M785.1 191.0L780.8 198.0M785.1 191.0L786.8 198.0M785.1 191.0L792.8 198.0M790.2 191.0L792.8 198.0M756.9 198.0L754.3 205.5M756.9 198.0L761.2 205.5M762.9 198.0L761.2 205.5M768.9 198.0L761.2 205.5M768.9 198.0L768.1 205.5M768.9 198.0L774.9 205.5M774.9 198.0L774.9 205.5M780.8 198.0L774.9 205.5M780.8 198.0L781.8 205.5M780.8 198.0L788.7 205.5M786.8 198.0L788.7 205.5M792.8 198.0L788.7 205.5M792.8 198.0L795.5 205.5M754.3 205.5L751.7 213.0M761.2 205.5L751.7 213.0M761.2 205.5L759.5 213.0M761.2 205.5L767.2 213.0M768.1 205.5L767.2 213.0M774.9 205.5L767.2 213.0M774.9 205.5L775.0 213.0M774.9 205.5L782.8 213.0M781.8 205.5L782.8 213.0M788.7 205.5L782.8 213.0M788.7 205.5L790.5 213.0M788.7 205.5L798.3 213.0M795.5 205.5L798.3 213.0M751.7 213.0L751.7 223.3M751.7 213.0L759.5 223.3M759.5 213.0L759.5 223.3M767.2 213.0L759.5 223.3M767.2 213.0L767.2 223.3M767.2 213.0L775.0 223.3M775.0 213.0L775.0 223.3M782.8 213.0L775.0 223.3M782.8 213.0L782.8 223.3M782.8 213.0L790.5 223.3M790.5 213.0L790.5 223.3M798.3 213.0L790.5 223.3M798.3 213.0L798.3 223.3" stroke="#020630" stroke-width="0.8" opacity="0.85" fill="none"/><polygon points="762,206 767,213 766,223 761,222" fill="#20b0c0" opacity="0.55"/><polygon points="788,206 783,213 784,223 789,222" fill="#20b0c0" opacity="0.55"/><polygon points="753,213 758,216 756,223 752,223" fill="#2090c0" opacity="0.4"/><polygon points="797,213 792,216 794,223 798,223" fill="#2090c0" opacity="0.4"/></svg>
<div class="a" style="left:303px;top:518px;width:843px;height:15px;background:#f7f7f7"></div>
<div class="a" style="left:304px;top:518px;width:72px;height:15px;background:#fbfbfd"></div>
<svg class="a" style="left:303px;top:517px" width="843" height="17" viewBox="0 0 843 17"><path d="M73 1.2H843" stroke="#333" stroke-width="1.4"/><path d="M0 15.5H843" stroke="#333" stroke-width="1.4"/><path d="M1 1L8.5 15.5M66 15.5L73 1M68.5 4L73.5 15.5M141.7 1L148.5 15.5M140.6 15.5L144.5 8M225.7 15.5L233.6 1" stroke="#222" stroke-width="1.2" fill="none"/></svg>
<div class="t" style="left:314px;top:520.9px;font-size:11px;line-height:11px;font-weight:bold;color:#111;">Geometry</div>
<div class="t" style="left:378px;top:520.9px;font-size:11px;line-height:11px;color:#111;">Print Preview</div>
<div class="t" style="left:454px;top:520.9px;font-size:11px;line-height:11px;color:#111;">Report Preview</div>
<div class="a" style="left:303px;top:539px;width:533px;height:19px;background:linear-gradient(#a6bfdf,#98b3d8)"></div>
<div class="a" style="left:303px;top:558px;width:533px;height:2px;background:#7a8898"></div>
<div class="t" style="left:307px;top:543.9px;font-size:11px;line-height:11px;color:#ffffff;">Graph</div>
<svg class="a" style="left:826px;top:544px" width="7" height="9" viewBox="0 0 7 9"><path d="M1 0h5v5H1z" fill="#fff"/><path d="M2.5 1h2v3h-2z" fill="#a0bade"/><path d="M0 5.5h7" stroke="#fff" stroke-width="1.2"/><path d="M3.5 6v3" stroke="#fff" stroke-width="1.2"/></svg>
<div class="a" style="left:304px;top:560px;width:532px;height:78px;background:#fff"></div>
<div class="a" style="left:304px;top:560px;width:532px;height:23px;background:#f0f0f0"></div>
<div class="a" style="left:307px;top:563px;width:1px;height:17px;background:#b0b0b0"></div>
<div class="a" style="left:308px;top:563px;width:1px;height:17px;background:#ffffff"></div>
<div class="t" style="left:313px;top:566.9px;font-size:11px;line-height:11px;color:#1a1a1a;">Animation</div>
<svg class="a" style="left:373px;top:564px" width="16" height="15" viewBox="0 0 16 15"><rect x="0" y="0" width="3" height="15" fill="#a8a8a8"/><path d="M16 0v15L3 7.5z" fill="#a8a8a8"/></svg>
<div class="a" style="left:398px;top:565px;width:3px;height:10px;background:#a01010"></div>
<div class="a" style="left:404px;top:565px;width:3px;height:10px;background:#a01010"></div>
<div class="a" style="left:419px;top:566px;width:11px;height:10px;background:#a01010"></div>
<svg class="a" style="left:440px;top:564px" width="16" height="15" viewBox="0 0 16 15"><rect x="13" y="0" width="3" height="15" fill="#a8a8a8"/><path d="M0 0v15L13 7.5z" fill="#a8a8a8"/></svg>
<div class="a" style="left:461px;top:563px;width:1px;height:17px;background:#b0b0b0"></div>
<div class="a" style="left:462px;top:563px;width:1px;height:17px;background:#ffffff"></div>
<svg class="a" style="left:471px;top:565px" width="14" height="13" viewBox="0 0 14 13"><rect x="0.5" y="0.5" width="12" height="9" fill="#fff" stroke="#a0a0a0"/><path d="M4.5 1v8M8.5 1v8" stroke="#a0a0a0"/><path d="M1 12h2M5 12h2M9 12h3" stroke="#a0a0a0"/></svg>
<svg class="a" style="left:493px;top:565px" width="14" height="13" viewBox="0 0 14 13"><rect x="0.5" y="0.5" width="12" height="9" fill="#fff" stroke="#a0a0a0"/><path d="M4.5 1v8M8.5 1v8" stroke="#a0a0a0"/><path d="M1 12h2M5 12h2M9 12h3" stroke="#a0a0a0"/></svg>
<div class="a" style="left:514px;top:563px;width:1px;height:17px;background:#b0b0b0"></div>
<div class="a" style="left:515px;top:563px;width:1px;height:17px;background:#ffffff"></div>
<div class="a" style="left:522px;top:563px;width:131px;height:18px;background:#f0f0f0"></div>
<div class="t" style="left:528px;top:566.9px;font-size:11px;line-height:11px;color:#a0a0a0;">20 Frames</div>
<svg class="a" style="left:640px;top:570px" width="7" height="4" viewBox="0 0 7 4"><path d="M0 0H7L3.5 4Z" fill="#a8a8a8"/></svg>
<div class="a" style="left:657px;top:563px;width:129px;height:18px;background:#fff;border:1px solid #c8c8c8"></div>
<div class="t" style="left:663px;top:566.9px;font-size:11px;line-height:11px;color:#1a1a1a;">0,4 Sec</div>
<div class="a" style="left:771px;top:564px;width:14px;height:16px;background:#f0f0f0"></div>
<svg class="a" style="left:774px;top:570px" width="7" height="4" viewBox="0 0 7 4"><path d="M0 0H7L3.5 4Z" fill="#000"/></svg>
<div class="a" style="left:791px;top:563px;width:1px;height:17px;background:#b0b0b0"></div>
<div class="a" style="left:792px;top:563px;width:1px;height:17px;background:#ffffff"></div>
<svg class="a" style="left:800px;top:565px" width="15" height="14" viewBox="0 0 15 14"><rect x="0" y="0" width="9" height="8" fill="#c8c8c8"/><rect x="4" y="4" width="11" height="10" fill="#a8a8a8" stroke="#f0f0f0"/></svg>
<div class="a" style="left:821px;top:563px;width:1px;height:17px;background:#b0b0b0"></div>
<div class="a" style="left:822px;top:563px;width:1px;height:17px;background:#ffffff"></div>
<svg class="a" style="left:829px;top:565px" width="7" height="13" viewBox="0 0 7 13"><circle cx="7" cy="6.5" r="6" fill="#fff" stroke="#c01010" stroke-width="2"/><rect x="4" y="3" width="3" height="7" fill="#c01010"/></svg>
<div class="a" style="left:352px;top:602px;width:461px;height:4px;background:#fff;border:1px solid #222;border-width:1px 1px 1px 1px"></div>
<div class="a" style="left:352px;top:612px;width:461px;height:14px;background:#fff;border:1px solid #b8b8b8"></div>
<div class="a" style="left:304px;top:637px;width:532px;height:21px;background:#f0f0f0"></div>
<svg class="a" style="left:295px;top:636px" width="260" height="24" viewBox="0 0 260 24"><path d="M11 1L29 20.5Q30.5 21.5 32 21.5H81.5Q83.5 21.5 83.5 19.5V1" fill="#ededed" stroke="#a8a8a8"/><path d="M86 1V18.5Q86 20.5 89 20.5H203L192 1" fill="#ededed" stroke="#a8a8a8"/><path d="M192 1L203 19Q204 21 207 21H242Q244 21 244 19V1" fill="#f7f7f7" stroke="#a8a8a8"/></svg>
<div class="a" style="left:303px;top:518px;width:1px;height:119px;background:#5a5a5a"></div>
<div class="t" style="left:327px;top:642.4px;font-size:11px;line-height:11px;color:#1a1a1a;">Messages</div>
<div class="t" style="left:386px;top:642.4px;font-size:11px;line-height:11px;color:#1a1a1a;">Graphics Annotations</div>
<div class="t" style="left:504px;top:642.4px;font-size:11px;line-height:11px;font-weight:bold;color:#111;">Graph</div>
<div class="a" style="left:836px;top:539px;width:5px;height:119px;background:#fafafa"></div>
<div class="a" style="left:842px;top:539px;width:304px;height:19px;background:linear-gradient(#dfe8f3,#cdd9ea)"></div>
<div class="t" style="left:845px;top:543.9px;font-size:11px;line-height:11px;color:#1a1a1a;">Tabular Data</div>
<div class="a" style="left:842px;top:558px;width:304px;height:100px;background:#a6a6a6"></div>
<div class="a" style="left:841px;top:558px;width:2px;height:100px;background:#787878"></div>
<div class="a" style="left:844px;top:560px;width:279px;height:16px;background:#f0f0f0"></div>
<div class="a" style="left:844px;top:576px;width:279px;height:15px;background:#f0f0f0"></div>
<div class="a" style="left:857px;top:560px;width:1px;height:31px;background:#c0c0c0"></div>
<div class="a" style="left:905px;top:560px;width:1px;height:31px;background:#c0c0c0"></div>
<div class="a" style="left:1013px;top:560px;width:1px;height:31px;background:#c0c0c0"></div>
<div class="a" style="left:1123px;top:560px;width:1px;height:31px;background:#c0c0c0"></div>
<div class="a" style="left:844px;top:575px;width:279px;height:1px;background:#c0c0c0"></div>
<div class="a" style="left:844px;top:591px;width:279px;height:1px;background:#c0c0c0"></div>
<div class="a" style="left:858px;top:561px;width:46px;height:14px;background:#eae6e2"></div>
<div class="a" style="left:906px;top:561px;width:106px;height:14px;background:#f0f0f0"></div>
<div class="a" style="left:1014px;top:561px;width:108px;height:14px;background:#e8f0e0"></div>
<div class="t" style="left:861px;top:562.9px;font-size:11px;line-height:11px;color:#1a1a1a;">Time [s]</div>
<svg class="a" style="left:909px;top:562px" width="13" height="13" viewBox="0 0 13 13"><rect x="0.5" y="0.5" width="12" height="12" fill="#fff" stroke="#777"/><path d="M3 6.5l2.5 2.5L10 3.5" stroke="#000" stroke-width="1.7" fill="none"/></svg>
<div class="t" style="left:926px;top:562.9px;font-size:11px;line-height:11px;color:#c02030;">Minimum [MPa]</div>
<svg class="a" style="left:1017px;top:562px" width="13" height="13" viewBox="0 0 13 13"><rect x="0.5" y="0.5" width="12" height="12" fill="#fff" stroke="#777"/><path d="M3 6.5l2.5 2.5L10 3.5" stroke="#000" stroke-width="1.7" fill="none"/></svg>
<div class="t" style="left:1035px;top:562.9px;font-size:11px;line-height:11px;color:#30a040;">Maximum [MPa]</div>
<div class="t" style="left:847px;top:578.9px;font-size:11px;line-height:11px;color:#1a1a1a;">1</div>
<div class="t" style="left:860px;top:578.9px;font-size:11px;line-height:11px;color:#1a1a1a;">1,</div>
<div class="t" style="left:908px;top:578.9px;font-size:11px;line-height:11px;color:#1a1a1a;">1,0264</div>
<div class="t" style="left:1017px;top:578.9px;font-size:11px;line-height:11px;color:#1a1a1a;">393,08</div>
<div class="a" style="left:0px;top:658px;width:1146px;height:24px;background:#f0f0f0"></div>
<div class="a" style="left:0px;top:663px;width:1146px;height:1px;background:#d0d0d0"></div>
<div class="a" style="left:283px;top:665px;width:1px;height:16px;background:#c8c8c8"></div>
<div class="a" style="left:449px;top:665px;width:1px;height:16px;background:#c8c8c8"></div>
<div class="a" style="left:590px;top:665px;width:1px;height:16px;background:#c8c8c8"></div>
<div class="a" style="left:897px;top:665px;width:1px;height:16px;background:#c8c8c8"></div>
<svg class="a" style="left:451px;top:665px" width="15" height="16" viewBox="0 0 15 16"><path d="M1 4h12v7H6l-3 4v-4H1z" fill="#f0d040" stroke="#a08020"/><text x="6" y="10" font-size="11" font-weight="bold" fill="#111" font-family="Liberation Sans">0</text></svg>
<div class="t" style="left:470px;top:667.9px;font-size:11px;line-height:11px;color:#1a1a1a;">No Messages</div>
<div class="t" style="left:592px;top:667.9px;font-size:11px;line-height:11px;color:#1a1a1a;">No Selection</div>
<div class="t" style="left:899px;top:667.9px;font-size:11px;line-height:11px;color:#1a1a1a;">Metric (mm, kg, N, s, mV, mA)</div>
<div class="t" style="left:1062px;top:667.9px;font-size:11px;line-height:11px;color:#1a1a1a;">Degrees</div>
<div class="t" style="left:1112px;top:667.9px;font-size:11px;line-height:11px;color:#1a1a1a;">rad/s</div>
<div class="a" style="left:0px;top:682px;width:1146px;height:38px;background:#0d0f17"></div>
<svg class="a" style="left:-4px;top:693px" width="14" height="16" viewBox="0 0 14 16"><circle cx="6" cy="6" r="5" fill="none" stroke="#fff" stroke-width="1.5"/><path d="M2.5 9.5L-1 13" stroke="#fff" stroke-width="1.5"/></svg>
<svg class="a" style="left:39px;top:692px" width="19" height="15" viewBox="0 0 19 15"><rect x="3.5" y="1.5" width="12" height="12" fill="none" stroke="#fff" stroke-width="1.3"/><path d="M1 3v9M18 3v9" stroke="#fff" stroke-width="1.3"/></svg>
<svg class="a" style="left:86px;top:690px" width="21" height="21" viewBox="0 0 21 21"><circle cx="10.5" cy="10.5" r="10" fill="#db4437"/><path d="M10.5 10.5L1.8 5.5A10 10 0 0 1 19.2 5.5z" fill="#db4437"/><path d="M1.8 5.5A10 10 0 0 0 10.5 20.5L15 12.5z" fill="#0f9d58"/><path d="M19.2 5.5A10 10 0 0 1 10.5 20.5L15 12.5z" fill="#f4c20d"/><circle cx="10.5" cy="10.5" r="4.8" fill="#fff"/><circle cx="10.5" cy="10.5" r="3.7" fill="#4285f4"/></svg>
<svg class="a" style="left:131px;top:693px" width="22" height="15" viewBox="0 0 22 15"><rect x="0" y="0" width="22" height="15" fill="#fff"/><path d="M0 0l11 8L22 0" stroke="#0d0f17" stroke-width="2" fill="none"/><path d="M0 15l8-6M22 15l-8-6" stroke="#ccc"/></svg>
<svg class="a" style="left:178px;top:691px" width="20" height="18" viewBox="0 0 20 18"><path d="M0 2h7l2 2h11v14H0z" fill="#e8b830"/><rect x="0" y="6" width="20" height="12" fill="#f8d860"/><rect x="4" y="10" width="12" height="4" fill="#3a7ad0"/></svg>
<svg class="a" style="left:224px;top:689px" width="21" height="22" viewBox="0 0 21 22"><rect x="0" y="0" width="21" height="22" rx="2" fill="#3050c8"/><rect x="4" y="0" width="12" height="7" fill="#dde"/><rect x="3" y="11" width="15" height="11" fill="#fff"/><path d="M5 14h11M5 17h11M5 20h11" stroke="#e04040"/></svg>
<svg class="a" style="left:268px;top:689px" width="23" height="23" viewBox="0 0 23 23"><circle cx="11.5" cy="11.5" r="11" fill="#e66000"/><circle cx="12" cy="12" r="7" fill="#2a3a90"/><path d="M2 8c2-6 10-9 16-5-4-1-8 1-9 4 3-1 6 1 5 4" fill="#ff9500"/><path d="M1 11c0 8 8 13 15 11 4-1 7-5 7-10-2 6-9 8-14 6" fill="#ffb300"/></svg>
<svg class="a" style="left:314px;top:689px" width="21" height="22" viewBox="0 0 21 22"><rect x="0" y="0" width="21" height="22" rx="3" fill="#f0d000"/><path d="M6 20L11 2h2L7 20z" fill="#111"/><path d="M11 9l5 11h-3l-3-7z" fill="#111"/></svg>
<div class="a" style="left:350px;top:682px;width:44px;height:38px;background:#3a3a40"></div>
<svg class="a" style="left:361px;top:690px" width="22" height="22" viewBox="0 0 22 22"><circle cx="11" cy="11" r="11" fill="#e01818"/><path d="M4 16V5l7 7 7-7v11" stroke="#fff" stroke-width="3" fill="none"/></svg>
<svg class="a" style="left:407px;top:690px" width="22" height="22" viewBox="0 0 22 22"><circle cx="11" cy="11" r="10.5" fill="#333" stroke="#ddd" stroke-width="1.5"/><circle cx="11" cy="11" r="6.5" fill="#e01010"/></svg>
<div class="a" style="left:215px;top:718px;width:36px;height:2px;background:#aab"></div>
<div class="a" style="left:261px;top:718px;width:36px;height:2px;background:#aab"></div>
<div class="a" style="left:306px;top:718px;width:37px;height:2px;background:#aab"></div>
<div class="a" style="left:350px;top:718px;width:44px;height:2px;background:#aab"></div>
<div class="a" style="left:398px;top:718px;width:38px;height:2px;background:#aab"></div>
<svg class="a" style="left:729px;top:690px" width="21" height="21" viewBox="0 0 21 21"><circle cx="10.5" cy="10.5" r="10.5" fill="#fff"/><circle cx="10.5" cy="10.5" r="8.5" fill="#2a8ad8"/><text x="6" y="16" font-size="14" font-weight="bold" fill="#fff" font-family="Liberation Sans">?</text></svg>
<svg class="a" style="left:760px;top:693px" width="14" height="14" viewBox="0 0 14 14"><circle cx="7" cy="7" r="7" fill="#8a8a8a"/><path d="M10 4A4 4 0 1 0 10 10" stroke="#ddd" stroke-width="1.6" fill="none"/></svg>
<svg class="a" style="left:783px;top:694px" width="12" height="12" viewBox="0 0 12 12"><path d="M0 12L6 0l6 12h-3L6 6 3 12z" fill="#1a9ad8"/></svg>
<svg class="a" style="left:804px;top:693px" width="15" height="15" viewBox="0 0 15 15"><circle cx="7.5" cy="7.5" r="7.5" fill="#1a2a50"/><circle cx="10" cy="5.5" r="3" fill="none" stroke="#fff" stroke-width="1.4"/><circle cx="4.5" cy="10" r="2" fill="#fff"/><path d="M4.5 10l5-4" stroke="#fff" stroke-width="1.4"/></svg>
<svg class="a" style="left:828px;top:692px" width="15" height="15" viewBox="0 0 15 15"><rect x="0.5" y="0.5" width="14" height="12" fill="#111" stroke="#ccc"/><path d="M2 10l3-4 2 2 3-5 3 4" stroke="#2ad82a" fill="none"/><path d="M5 14h5" stroke="#ccc" stroke-width="1.5"/></svg>
<svg class="a" style="left:848px;top:694px" width="17" height="11" viewBox="0 0 17 11"><path d="M3 11h11a3 3 0 0 0 0-6 5 5 0 0 0-9-1 3.5 3.5 0 0 0-2 7z" fill="#fff"/></svg>
<svg class="a" style="left:871px;top:692px" width="15" height="15" viewBox="0 0 15 15"><circle cx="7.5" cy="7.5" r="7" fill="#333" stroke="#bbb"/><circle cx="7.5" cy="7.5" r="4.5" fill="#e01010"/></svg>
<svg class="a" style="left:893px;top:691px" width="17" height="17" viewBox="0 0 17 17"><path d="M8.5 0l3 5 5.5-1-3 5 3 5-5.5-1-3 5-3-5L0 14l3-5-3-5 5.5 1z" fill="#f07a10"/><circle cx="8.5" cy="8.5" r="2.5" fill="#fff"/></svg>
<svg class="a" style="left:917px;top:692px" width="15" height="15" viewBox="0 0 15 15"><rect x="0.5" y="0.5" width="14" height="11" fill="none" stroke="#fff"/><circle cx="7.5" cy="6" r="3" fill="#fff"/><path d="M5 14h5M7.5 12v2" stroke="#fff"/></svg>
<svg class="a" style="left:940px;top:691px" width="12" height="17" viewBox="0 0 12 17"><rect x="0" y="0" width="12" height="17" rx="6" fill="#1a7ae0"/><path d="M3 5l6 6-3 3V3l3 3-6 6" stroke="#fff" stroke-width="1.2" fill="none"/></svg>
<svg class="a" style="left:962px;top:692px" width="14" height="14" viewBox="0 0 14 14"><circle cx="7" cy="8" r="5" fill="none" stroke="#fff" stroke-width="1.6"/><circle cx="7" cy="8" r="1.8" fill="#fff"/><path d="M2 2l3 3" stroke="#fff" stroke-width="1.6"/></svg>
<svg class="a" style="left:983px;top:691px" width="17" height="17" viewBox="0 0 17 17"><rect x="0" y="0" width="17" height="17" fill="#5aaad8"/><rect x="3" y="3" width="11" height="9" fill="#8ad0f0" stroke="#1a5a90"/></svg>
<svg class="a" style="left:1006px;top:693px" width="17" height="13" viewBox="0 0 17 13"><rect x="0.5" y="3.5" width="16" height="9" fill="none" stroke="#fff"/><rect x="2" y="5" width="10" height="6" fill="#fff"/><path d="M1 0v4M4 0v4" stroke="#fff"/></svg>
<svg class="a" style="left:1031px;top:692px" width="14" height="14" viewBox="0 0 14 14"><path d="M1 13A12 12 0 0 1 13 1M4 13A9 9 0 0 1 13 4M7 13a6 6 0 0 1 6-6M10 13a3 3 0 0 1 3-3" stroke="#fff" stroke-width="1.2" fill="none"/></svg>
<svg class="a" style="left:1050px;top:692px" width="15" height="15" viewBox="0 0 15 15"><path d="M1 5h3l4-4v13l-4-4H1z" fill="none" stroke="#fff" stroke-width="1.2"/><path d="M10 4a5 5 0 0 1 0 7M12 2a8 8 0 0 1 0 11" stroke="#fff" stroke-width="1.2" fill="none"/></svg>
<div class="t" style="left:1076px;top:695.0px;font-size:12px;line-height:12px;color:#fff;">РУС</div>
<div class="t" style="left:1121px;top:686.0px;font-size:12px;line-height:12px;color:#fff;">15:32</div>
<div class="t" style="left:1107px;top:704.0px;font-size:12px;line-height:12px;color:#fff;">10.04.2018</div>
</body></html>
